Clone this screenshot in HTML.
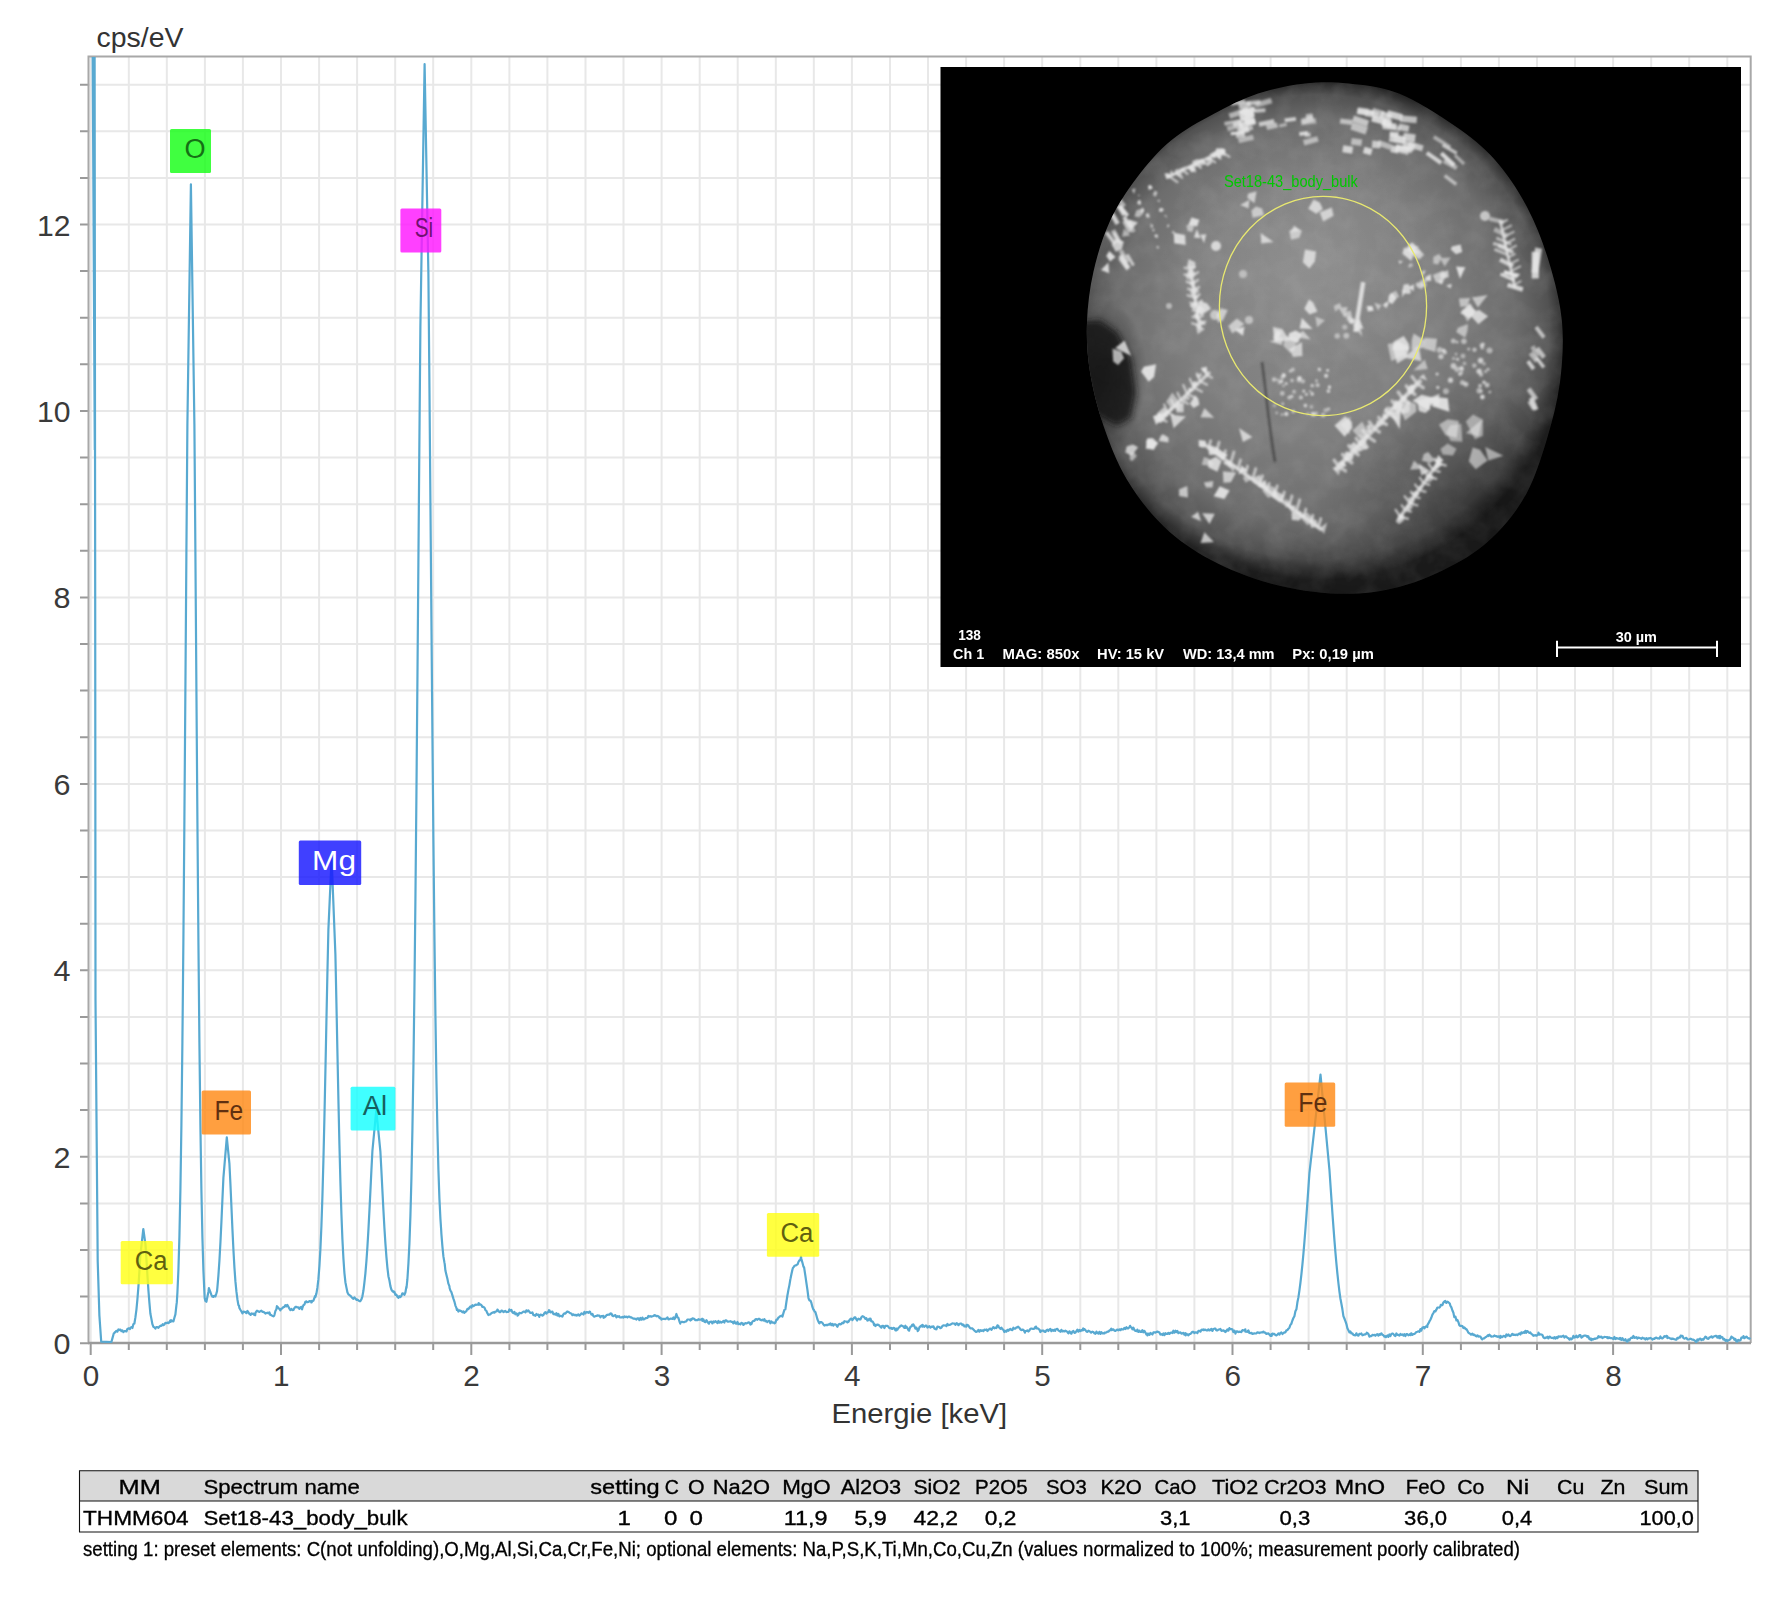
<!DOCTYPE html><html><head><meta charset="utf-8"><style>html,body{margin:0;padding:0;background:#fff;width:1782px;height:1608px;overflow:hidden}svg{display:block}text{font-family:"Liberation Sans", sans-serif}</style></head><body>
<svg width="1782" height="1608" viewBox="0 0 1782 1608">
<rect x="0" y="0" width="1782" height="1608" fill="#fff"/>
<defs><clipPath id="plot"><rect x="89" y="57" width="1662" height="1286"/></clipPath><radialGradient id="sph" cx="0.5" cy="0.47" r="0.5" fx="0.47" fy="0.40"><stop offset="0" stop-color="#8e8e8e"/><stop offset="0.55" stop-color="#858585"/><stop offset="0.82" stop-color="#6c6c6c"/><stop offset="0.95" stop-color="#3e3e3e"/><stop offset="1" stop-color="#1a1a1a"/></radialGradient></defs>
<path d="M90.7 57V1343M128.8 57V1343M166.8 57V1343M204.9 57V1343M242.9 57V1343M281.0 57V1343M319.1 57V1343M357.1 57V1343M395.2 57V1343M433.2 57V1343M471.3 57V1343M509.4 57V1343M547.4 57V1343M585.5 57V1343M623.5 57V1343M661.6 57V1343M699.7 57V1343M737.7 57V1343M775.8 57V1343M813.8 57V1343M851.9 57V1343M890.0 57V1343M928.0 57V1343M966.1 57V1343M1004.1 57V1343M1042.2 57V1343M1080.3 57V1343M1118.3 57V1343M1156.4 57V1343M1194.4 57V1343M1232.5 57V1343M1270.6 57V1343M1308.6 57V1343M1346.7 57V1343M1384.7 57V1343M1422.8 57V1343M1460.9 57V1343M1498.9 57V1343M1537.0 57V1343M1575.0 57V1343M1613.1 57V1343M1651.2 57V1343M1689.2 57V1343M1727.3 57V1343M89 1296.6H1751M89 1250.0H1751M89 1203.4H1751M89 1156.8H1751M89 1110.1H1751M89 1063.5H1751M89 1016.9H1751M89 970.3H1751M89 923.7H1751M89 877.1H1751M89 830.5H1751M89 783.9H1751M89 737.2H1751M89 690.6H1751M89 644.0H1751M89 597.4H1751M89 550.8H1751M89 504.2H1751M89 457.6H1751M89 411.0H1751M89 364.3H1751M89 317.7H1751M89 271.1H1751M89 224.5H1751M89 177.9H1751M89 131.3H1751M89 84.7H1751" stroke="#e8e8e8" stroke-width="2" fill="none"/>
<path d="M80 1343.2H89M80 1296.6H89M80 1250.0H89M80 1203.4H89M80 1156.8H89M80 1110.1H89M80 1063.5H89M80 1016.9H89M80 970.3H89M80 923.7H89M80 877.1H89M80 830.5H89M80 783.9H89M80 737.2H89M80 690.6H89M80 644.0H89M80 597.4H89M80 550.8H89M80 504.2H89M80 457.6H89M80 411.0H89M80 364.3H89M80 317.7H89M80 271.1H89M80 224.5H89M80 177.9H89M80 131.3H89M80 84.7H89M90.7 1343V1355.0M128.8 1343V1350.0M166.8 1343V1350.0M204.9 1343V1350.0M242.9 1343V1350.0M281.0 1343V1355.0M319.1 1343V1350.0M357.1 1343V1350.0M395.2 1343V1350.0M433.2 1343V1350.0M471.3 1343V1355.0M509.4 1343V1350.0M547.4 1343V1350.0M585.5 1343V1350.0M623.5 1343V1350.0M661.6 1343V1355.0M699.7 1343V1350.0M737.7 1343V1350.0M775.8 1343V1350.0M813.8 1343V1350.0M851.9 1343V1355.0M890.0 1343V1350.0M928.0 1343V1350.0M966.1 1343V1350.0M1004.1 1343V1350.0M1042.2 1343V1355.0M1080.3 1343V1350.0M1118.3 1343V1350.0M1156.4 1343V1350.0M1194.4 1343V1350.0M1232.5 1343V1355.0M1270.6 1343V1350.0M1308.6 1343V1350.0M1346.7 1343V1350.0M1384.7 1343V1350.0M1422.8 1343V1355.0M1460.9 1343V1350.0M1498.9 1343V1350.0M1537.0 1343V1350.0M1575.0 1343V1350.0M1613.1 1343V1355.0M1651.2 1343V1350.0M1689.2 1343V1350.0M1727.3 1343V1350.0" stroke="#9a9a9a" stroke-width="2" fill="none"/>
<path d="M88.5 1343V56.5H1750.7V1343" stroke="#a8a8a8" stroke-width="2" fill="none"/>
<path d="M88 1343H1751" stroke="#9a9a9a" stroke-width="2.5" fill="none"/>
<text x="70.5" y="1354.2" font-size="29.5" fill="#3a3a3a" text-anchor="end" textLength="17.0" lengthAdjust="spacingAndGlyphs">0</text>
<text x="70.5" y="1167.8" font-size="29.5" fill="#3a3a3a" text-anchor="end" textLength="17.0" lengthAdjust="spacingAndGlyphs">2</text>
<text x="70.5" y="981.3" font-size="29.5" fill="#3a3a3a" text-anchor="end" textLength="17.0" lengthAdjust="spacingAndGlyphs">4</text>
<text x="70.5" y="794.9" font-size="29.5" fill="#3a3a3a" text-anchor="end" textLength="17.0" lengthAdjust="spacingAndGlyphs">6</text>
<text x="70.5" y="608.4" font-size="29.5" fill="#3a3a3a" text-anchor="end" textLength="17.0" lengthAdjust="spacingAndGlyphs">8</text>
<text x="70.5" y="422.0" font-size="29.5" fill="#3a3a3a" text-anchor="end" textLength="33.5" lengthAdjust="spacingAndGlyphs">10</text>
<text x="70.5" y="235.5" font-size="29.5" fill="#3a3a3a" text-anchor="end" textLength="33.5" lengthAdjust="spacingAndGlyphs">12</text>
<text x="91.0" y="1386.2" font-size="29" fill="#3a3a3a" text-anchor="middle" textLength="16.5" lengthAdjust="spacingAndGlyphs">0</text>
<text x="281.3" y="1386.2" font-size="29" fill="#3a3a3a" text-anchor="middle" textLength="16.5" lengthAdjust="spacingAndGlyphs">1</text>
<text x="471.6" y="1386.2" font-size="29" fill="#3a3a3a" text-anchor="middle" textLength="16.5" lengthAdjust="spacingAndGlyphs">2</text>
<text x="661.9" y="1386.2" font-size="29" fill="#3a3a3a" text-anchor="middle" textLength="16.5" lengthAdjust="spacingAndGlyphs">3</text>
<text x="852.2" y="1386.2" font-size="29" fill="#3a3a3a" text-anchor="middle" textLength="16.5" lengthAdjust="spacingAndGlyphs">4</text>
<text x="1042.5" y="1386.2" font-size="29" fill="#3a3a3a" text-anchor="middle" textLength="16.5" lengthAdjust="spacingAndGlyphs">5</text>
<text x="1232.8" y="1386.2" font-size="29" fill="#3a3a3a" text-anchor="middle" textLength="16.5" lengthAdjust="spacingAndGlyphs">6</text>
<text x="1423.1" y="1386.2" font-size="29" fill="#3a3a3a" text-anchor="middle" textLength="16.5" lengthAdjust="spacingAndGlyphs">7</text>
<text x="1613.4" y="1386.2" font-size="29" fill="#3a3a3a" text-anchor="middle" textLength="16.5" lengthAdjust="spacingAndGlyphs">8</text>
<text x="96.5" y="47.4" font-size="27" fill="#333" textLength="87" lengthAdjust="spacingAndGlyphs">cps/eV</text>
<text x="831.6" y="1423.3" font-size="27" fill="#333" textLength="175.5" lengthAdjust="spacingAndGlyphs">Energie [keV]</text>
<g clip-path="url(#plot)"><path d="M94.8 450.0 L92.6 40.0 L94.6 40.0 L95.2 600.0 L95.5 1000.0 L97.7 1261.0 L99.4 1315.6 L101.2 1341.7 L111.4 1342.0 L112.4 1338.4 L113.4 1334.8 L113.8 1333.3 L114.4 1332.9 L115.4 1331.9 L116.4 1330.8 L117.4 1331.5 L118.4 1329.4 L119.2 1330.1 L119.4 1329.8 L120.4 1329.5 L121.4 1331.2 L122.4 1330.5 L123.4 1332.1 L123.9 1331.4 L124.4 1331.1 L125.4 1331.2 L126.4 1331.5 L127.4 1328.9 L128.4 1328.4 L129.4 1328.6 L130.0 1329.0 L130.4 1327.9 L131.4 1327.2 L132.4 1328.0 L133.4 1324.1 L134.4 1323.5 L135.4 1317.4 L136.4 1309.8 L137.4 1299.3 L138.4 1286.9 L139.4 1271.2 L140.4 1255.2 L143.3 1229.0 L145.4 1243.9 L146.4 1258.6 L147.4 1274.8 L148.4 1290.2 L149.4 1302.6 L150.4 1313.8 L151.4 1318.9 L152.4 1324.2 L153.4 1326.8 L154.4 1327.4 L155.4 1328.6 L155.8 1327.5 L156.4 1327.2 L157.4 1327.1 L158.4 1327.8 L159.4 1326.6 L160.4 1325.7 L161.4 1325.8 L162.4 1324.8 L162.8 1324.2 L163.4 1325.2 L164.4 1324.5 L165.4 1322.8 L166.4 1323.2 L167.4 1322.6 L168.4 1323.1 L169.4 1322.1 L170.4 1320.3 L170.5 1322.0 L171.4 1320.3 L172.4 1321.1 L173.4 1321.4 L174.4 1317.8 L175.4 1314.4 L176.4 1305.4 L176.8 1302.4 L177.4 1292.6 L178.4 1270.3 L179.4 1237.1 L180.4 1189.8 L181.4 1125.4 L182.4 1042.1 L183.4 939.5 L184.4 819.8 L185.4 688.2 L186.4 552.8 L187.4 424.1 L190.9 184.3 L194.4 424.0 L195.4 552.7 L196.4 688.1 L197.4 819.7 L198.4 939.4 L199.4 1042.0 L200.4 1125.3 L201.4 1189.7 L202.4 1237.0 L203.4 1270.2 L204.4 1292.5 L204.7 1298.2 L205.4 1300.9 L206.4 1301.8 L207.4 1296.8 L208.4 1292.0 L208.9 1288.2 L209.4 1289.8 L210.4 1292.0 L211.4 1295.0 L212.4 1296.7 L213.2 1296.2 L213.4 1296.9 L214.4 1295.8 L215.4 1296.4 L216.4 1293.4 L217.0 1291.3 L217.4 1287.4 L218.4 1275.6 L219.4 1261.0 L220.4 1243.0 L221.4 1222.2 L222.4 1199.8 L223.4 1177.9 L226.8 1137.4 L229.4 1163.3 L230.4 1183.5 L231.4 1206.0 L232.4 1228.6 L233.4 1249.3 L234.4 1267.1 L235.4 1281.2 L236.4 1291.4 L237.4 1299.2 L238.4 1305.1 L239.0 1305.6 L239.4 1308.0 L240.4 1309.8 L241.3 1311.3 L241.4 1311.2 L242.4 1313.4 L243.4 1311.7 L244.4 1311.9 L245.4 1312.1 L246.4 1313.2 L247.4 1310.9 L248.0 1311.7 L248.4 1312.3 L249.4 1313.9 L250.4 1314.6 L250.7 1314.9 L251.4 1313.4 L252.4 1313.8 L253.4 1313.6 L254.4 1315.0 L255.2 1315.2 L255.4 1312.8 L256.4 1311.4 L257.0 1310.7 L257.4 1310.8 L258.4 1311.5 L259.4 1311.9 L260.4 1311.2 L261.4 1310.6 L262.4 1311.8 L263.4 1311.8 L264.4 1312.5 L265.4 1313.6 L266.4 1313.0 L267.4 1312.7 L267.9 1313.0 L268.4 1313.4 L269.4 1312.3 L270.4 1315.0 L271.4 1315.2 L272.4 1316.0 L273.4 1316.3 L274.2 1315.6 L274.4 1315.0 L275.4 1311.0 L276.4 1309.2 L276.9 1306.2 L277.4 1306.7 L278.4 1308.0 L279.4 1308.9 L280.4 1310.4 L280.5 1309.7 L281.4 1308.8 L282.4 1308.2 L283.4 1307.1 L284.4 1306.9 L285.4 1305.1 L286.4 1306.3 L286.8 1305.3 L287.4 1305.0 L288.4 1306.8 L289.4 1308.6 L290.4 1310.1 L291.4 1308.9 L292.4 1310.2 L293.4 1310.0 L294.4 1308.0 L294.9 1307.8 L295.4 1306.8 L296.4 1306.8 L297.4 1307.5 L298.4 1307.4 L299.4 1308.9 L300.4 1307.2 L301.4 1306.9 L302.1 1309.4 L302.4 1307.8 L303.4 1305.2 L304.4 1304.6 L305.4 1301.7 L306.4 1301.4 L306.6 1302.2 L307.4 1302.2 L308.4 1302.0 L309.4 1301.1 L310.4 1301.5 L311.2 1301.0 L311.4 1302.5 L312.4 1301.1 L313.4 1300.7 L314.4 1298.0 L315.2 1295.8 L315.4 1296.8 L316.4 1293.6 L317.4 1287.7 L318.4 1279.2 L319.4 1266.1 L320.4 1249.1 L321.4 1226.2 L322.4 1196.9 L323.4 1160.8 L324.4 1118.6 L325.4 1071.6 L326.4 1022.2 L327.4 973.6 L328.4 929.4 L331.6 858.0 L335.4 954.5 L336.4 1001.7 L337.4 1051.1 L338.4 1099.2 L339.4 1143.4 L340.4 1181.8 L341.4 1213.7 L342.4 1239.0 L343.4 1258.1 L344.4 1272.8 L345.4 1282.2 L346.4 1287.4 L347.4 1292.3 L348.4 1294.4 L349.4 1295.0 L350.4 1295.8 L351.2 1296.8 L351.4 1296.8 L352.4 1298.1 L353.4 1298.9 L354.4 1297.5 L355.4 1298.6 L355.6 1298.7 L356.4 1299.8 L357.4 1299.6 L358.4 1300.4 L359.4 1301.1 L360.3 1301.2 L360.4 1301.0 L361.4 1299.4 L362.4 1296.3 L363.4 1290.8 L364.4 1282.7 L365.4 1273.3 L366.4 1261.4 L367.4 1247.0 L368.4 1230.1 L369.4 1211.1 L370.4 1190.9 L371.4 1170.4 L372.4 1151.0 L376.3 1110.0 L380.4 1151.7 L381.4 1170.7 L382.4 1190.5 L383.4 1209.8 L384.4 1227.7 L385.4 1243.4 L386.4 1256.6 L387.4 1267.6 L388.4 1276.2 L389.4 1280.3 L390.4 1286.1 L391.4 1289.6 L392.4 1291.1 L393.4 1292.0 L393.6 1291.4 L394.4 1291.9 L395.4 1294.8 L396.4 1294.6 L397.4 1296.7 L398.4 1297.9 L398.6 1296.5 L399.4 1296.2 L400.4 1297.1 L401.4 1295.8 L402.3 1293.4 L402.4 1293.4 L403.4 1293.6 L404.4 1294.9 L405.4 1292.5 L406.4 1286.6 L406.5 1287.8 L407.4 1279.2 L408.4 1263.8 L409.4 1243.9 L410.4 1216.2 L411.4 1179.0 L412.4 1130.2 L413.4 1068.2 L414.4 991.9 L415.4 901.3 L416.4 797.4 L417.4 682.9 L418.4 562.2 L419.4 440.9 L420.4 325.9 L424.6 64.2 L428.4 274.1 L429.4 382.1 L430.4 499.4 L431.4 618.7 L432.4 733.8 L433.4 839.9 L434.4 933.7 L435.4 1013.4 L436.4 1078.6 L437.4 1130.1 L438.4 1169.3 L439.4 1198.1 L440.4 1218.5 L441.1 1228.8 L441.4 1234.0 L442.4 1246.3 L443.4 1256.4 L444.4 1262.4 L444.7 1263.9 L445.4 1270.5 L446.4 1274.7 L447.4 1278.7 L448.4 1283.7 L449.4 1286.1 L449.6 1288.0 L450.4 1290.5 L451.4 1292.1 L452.4 1295.3 L453.4 1298.6 L454.4 1301.6 L455.4 1305.6 L456.4 1307.9 L456.9 1309.9 L457.4 1309.2 L458.4 1311.5 L459.4 1310.3 L460.4 1310.7 L461.4 1311.3 L462.4 1312.3 L463.4 1311.3 L464.4 1312.8 L465.3 1311.9 L465.4 1311.9 L466.4 1311.1 L467.4 1308.9 L468.4 1309.2 L469.4 1307.7 L470.4 1306.4 L471.4 1307.7 L472.4 1305.2 L472.6 1305.8 L473.4 1306.2 L474.4 1305.5 L475.4 1304.6 L476.4 1304.8 L477.4 1304.5 L478.4 1304.8 L478.7 1303.0 L479.4 1304.6 L480.4 1304.4 L481.4 1305.1 L482.4 1307.0 L483.4 1306.9 L484.4 1307.6 L484.8 1308.4 L485.4 1310.0 L486.4 1310.8 L487.4 1313.3 L488.4 1315.0 L489.4 1314.5 L490.4 1314.3 L491.4 1313.1 L492.4 1312.8 L493.4 1312.1 L494.4 1312.7 L495.4 1311.5 L496.4 1311.4 L496.9 1311.2 L497.4 1309.6 L498.4 1310.7 L499.4 1312.1 L500.4 1312.1 L501.4 1310.6 L502.4 1310.9 L503.4 1312.1 L504.2 1311.4 L504.4 1311.7 L505.4 1310.9 L506.4 1312.1 L507.4 1312.0 L508.4 1311.9 L509.4 1309.5 L510.2 1310.7 L510.4 1310.6 L511.4 1309.9 L512.4 1312.4 L513.4 1313.2 L514.4 1311.8 L515.4 1314.3 L516.4 1313.4 L517.4 1314.2 L517.5 1315.6 L518.4 1314.9 L519.4 1312.8 L520.4 1313.2 L521.4 1313.1 L522.4 1312.4 L523.4 1311.7 L524.4 1311.7 L525.4 1312.4 L526.4 1310.3 L527.2 1311.4 L527.4 1311.2 L528.4 1310.5 L529.4 1311.8 L530.4 1312.9 L531.4 1313.0 L532.4 1312.3 L533.4 1315.1 L534.4 1315.0 L535.4 1315.8 L536.4 1314.0 L537.4 1314.8 L538.4 1314.6 L539.3 1316.9 L539.4 1315.6 L540.4 1314.7 L541.4 1314.9 L542.4 1315.7 L543.4 1315.0 L544.4 1313.0 L545.4 1312.2 L546.4 1313.7 L547.4 1312.3 L548.4 1312.1 L549.0 1310.2 L549.4 1310.3 L550.4 1312.4 L551.4 1312.1 L552.4 1311.6 L553.4 1314.2 L554.4 1313.8 L555.4 1314.7 L556.4 1313.2 L557.4 1315.6 L558.4 1313.9 L559.4 1316.4 L560.4 1315.8 L561.2 1315.8 L561.4 1316.2 L562.4 1316.6 L563.4 1314.2 L564.4 1313.3 L565.4 1313.7 L566.4 1312.3 L567.2 1311.5 L567.4 1311.7 L568.4 1311.8 L569.4 1312.6 L570.4 1313.2 L571.4 1313.6 L572.4 1315.2 L573.4 1314.3 L574.4 1315.2 L575.4 1314.8 L576.4 1315.6 L576.9 1314.9 L577.4 1315.3 L578.4 1314.3 L579.4 1315.7 L580.4 1314.8 L581.4 1313.4 L582.4 1313.7 L583.4 1314.5 L584.4 1311.9 L585.4 1313.3 L586.4 1312.2 L587.4 1312.2 L588.4 1312.9 L589.4 1311.6 L590.0 1311.8 L590.4 1312.7 L591.4 1314.5 L592.4 1313.8 L593.4 1316.1 L594.4 1316.7 L594.5 1316.7 L595.4 1316.1 L596.4 1316.0 L597.4 1315.3 L598.4 1315.6 L599.4 1315.5 L600.4 1317.3 L601.4 1316.1 L602.4 1316.0 L603.4 1315.8 L603.5 1317.8 L604.4 1317.5 L605.4 1316.7 L606.4 1315.3 L607.4 1314.8 L608.4 1314.6 L609.4 1314.7 L610.4 1313.5 L611.3 1314.0 L611.4 1313.5 L612.4 1315.8 L613.4 1316.2 L614.4 1315.5 L615.4 1315.1 L616.4 1317.4 L617.4 1316.2 L618.4 1316.7 L619.2 1316.1 L619.4 1317.1 L620.4 1317.4 L621.4 1317.5 L622.4 1316.8 L623.4 1317.6 L624.4 1316.3 L625.4 1317.1 L626.4 1316.7 L627.4 1317.5 L628.4 1316.6 L629.4 1316.6 L630.4 1317.4 L631.4 1317.3 L632.4 1318.2 L632.6 1318.1 L633.4 1318.7 L634.4 1318.6 L635.4 1318.9 L636.4 1319.5 L637.4 1318.3 L638.4 1318.3 L639.4 1320.1 L640.4 1318.0 L641.4 1319.7 L641.6 1319.5 L642.4 1317.6 L643.4 1319.4 L644.4 1319.2 L645.4 1318.2 L646.4 1318.1 L647.4 1318.0 L648.4 1315.9 L649.4 1316.6 L650.4 1316.2 L651.4 1316.7 L652.4 1316.3 L653.4 1316.0 L654.4 1315.1 L655.1 1315.6 L655.4 1315.3 L656.4 1316.3 L657.4 1315.9 L658.4 1316.3 L659.4 1317.5 L659.6 1318.2 L660.4 1317.6 L661.4 1319.5 L662.4 1318.8 L663.4 1318.9 L664.4 1318.9 L665.4 1319.1 L666.4 1318.6 L667.4 1317.3 L668.4 1319.4 L669.4 1319.2 L670.4 1318.6 L671.4 1318.7 L672.4 1319.0 L673.4 1317.5 L674.4 1319.2 L675.3 1318.0 L675.4 1317.1 L676.4 1314.0 L677.4 1317.2 L678.4 1317.9 L679.4 1321.3 L680.3 1323.7 L680.4 1322.5 L681.4 1321.9 L682.4 1321.9 L683.4 1322.2 L684.4 1322.1 L685.4 1321.5 L686.4 1321.3 L687.4 1319.5 L688.4 1319.5 L689.4 1319.5 L690.4 1320.5 L691.0 1319.2 L691.4 1319.9 L692.4 1318.4 L693.4 1318.6 L694.4 1319.1 L695.4 1320.1 L696.4 1320.2 L697.4 1320.2 L698.4 1319.2 L699.4 1319.7 L700.4 1319.6 L701.4 1319.6 L702.2 1318.7 L702.4 1320.8 L703.4 1319.4 L704.4 1321.8 L705.4 1322.2 L706.4 1320.2 L707.4 1321.7 L708.4 1323.1 L709.0 1323.7 L709.4 1322.3 L710.4 1321.8 L711.4 1321.6 L712.4 1323.4 L713.4 1321.4 L714.4 1322.3 L715.4 1321.1 L716.4 1322.0 L717.4 1323.1 L718.4 1320.9 L719.4 1322.6 L720.4 1321.7 L721.4 1322.6 L722.4 1322.1 L723.4 1320.8 L724.4 1322.5 L724.7 1321.4 L725.4 1320.3 L726.4 1320.3 L727.4 1321.7 L728.4 1321.7 L729.4 1321.5 L730.4 1321.2 L731.4 1321.8 L732.4 1321.9 L733.4 1323.4 L734.4 1321.3 L735.4 1323.4 L736.4 1323.7 L737.4 1322.0 L738.4 1324.2 L739.4 1323.8 L740.4 1324.4 L741.4 1322.9 L742.4 1323.2 L742.6 1323.3 L743.4 1324.9 L744.4 1323.8 L745.4 1323.2 L746.4 1323.4 L747.4 1323.0 L748.4 1322.4 L749.4 1322.6 L750.4 1324.5 L750.5 1323.0 L751.4 1324.1 L752.4 1321.6 L753.4 1320.9 L754.4 1320.8 L755.4 1319.3 L756.4 1319.0 L757.4 1319.8 L758.3 1319.0 L758.4 1318.8 L759.4 1318.8 L760.4 1319.9 L761.4 1320.3 L762.4 1319.7 L763.4 1320.5 L764.4 1319.1 L765.4 1321.3 L766.4 1320.9 L767.3 1322.1 L767.4 1321.8 L768.4 1321.1 L769.4 1320.8 L770.4 1323.3 L771.4 1321.5 L772.4 1322.6 L773.4 1322.5 L774.0 1322.6 L774.4 1323.3 L775.4 1322.7 L776.4 1319.7 L777.4 1319.6 L778.4 1317.5 L779.0 1317.4 L779.4 1316.9 L780.4 1316.0 L781.4 1315.7 L782.1 1315.6 L782.4 1316.7 L783.4 1313.1 L784.4 1309.9 L785.3 1309.4 L785.4 1309.0 L786.4 1302.0 L787.4 1295.5 L788.0 1292.3 L788.4 1289.9 L789.4 1285.1 L790.4 1279.0 L790.6 1278.3 L791.4 1274.2 L792.4 1269.8 L792.9 1268.0 L793.4 1267.4 L794.4 1266.0 L795.4 1265.4 L796.4 1265.2 L797.4 1264.3 L797.8 1264.0 L798.4 1262.0 L799.4 1260.4 L800.4 1260.1 L801.0 1256.6 L801.4 1259.0 L802.4 1262.6 L803.4 1266.6 L804.1 1267.3 L804.4 1269.4 L805.4 1275.9 L806.4 1282.9 L807.4 1289.6 L808.4 1297.5 L808.6 1298.5 L809.4 1300.4 L810.4 1300.5 L811.4 1302.9 L812.4 1306.9 L813.4 1309.7 L814.0 1310.0 L814.4 1311.3 L815.4 1312.1 L816.4 1315.5 L817.4 1319.3 L818.4 1321.5 L818.9 1322.7 L819.4 1323.3 L820.4 1322.0 L821.4 1322.1 L822.4 1322.8 L823.4 1324.3 L823.9 1325.0 L824.4 1325.6 L825.4 1325.1 L826.4 1324.9 L827.4 1325.2 L828.4 1324.4 L829.4 1324.6 L830.4 1323.3 L831.4 1325.2 L832.4 1323.8 L833.4 1325.6 L833.7 1324.9 L834.4 1324.3 L835.4 1324.4 L836.4 1325.2 L837.3 1326.7 L837.4 1326.8 L838.4 1324.6 L839.4 1323.9 L840.4 1324.5 L841.4 1324.1 L841.8 1323.3 L842.4 1322.6 L843.4 1323.2 L844.4 1321.2 L845.4 1321.5 L846.4 1321.5 L847.4 1322.4 L848.1 1321.3 L848.4 1321.8 L849.4 1320.2 L850.4 1319.1 L851.4 1318.6 L852.4 1320.0 L853.4 1318.8 L854.4 1317.3 L855.4 1317.4 L856.4 1319.4 L857.1 1320.5 L857.4 1319.6 L858.4 1318.7 L859.4 1319.3 L860.4 1319.5 L861.4 1317.2 L862.4 1316.2 L863.4 1316.5 L864.4 1317.4 L865.4 1318.8 L866.4 1318.2 L867.4 1320.5 L867.8 1320.6 L868.4 1319.8 L869.4 1318.7 L870.4 1320.4 L870.5 1318.6 L871.4 1321.3 L872.4 1321.3 L873.4 1322.7 L874.1 1325.2 L874.4 1324.0 L875.4 1326.0 L876.4 1325.1 L877.4 1324.6 L878.4 1324.9 L879.4 1325.7 L880.4 1326.6 L881.4 1327.6 L882.2 1325.8 L882.4 1326.4 L883.4 1326.0 L884.4 1328.1 L885.4 1325.9 L886.4 1325.8 L887.4 1325.8 L888.4 1326.8 L889.4 1328.1 L890.4 1328.2 L891.2 1327.8 L891.4 1328.6 L892.4 1328.9 L893.4 1327.9 L894.4 1328.0 L895.4 1330.4 L896.4 1330.4 L896.6 1328.7 L897.4 1329.6 L898.4 1328.0 L899.4 1327.1 L900.2 1326.3 L900.4 1325.8 L901.4 1325.4 L902.4 1326.1 L903.4 1326.3 L904.4 1327.9 L905.4 1325.7 L905.5 1327.9 L906.4 1326.7 L907.4 1328.0 L908.4 1330.1 L909.1 1330.7 L909.4 1329.3 L910.4 1326.8 L911.4 1326.4 L912.4 1324.6 L912.7 1325.6 L913.4 1324.5 L914.4 1326.1 L915.4 1328.7 L916.4 1327.6 L917.4 1329.7 L917.7 1331.1 L918.4 1330.3 L919.4 1327.4 L920.4 1326.4 L921.4 1325.5 L922.4 1326.7 L922.6 1324.8 L923.4 1326.2 L924.4 1326.8 L925.4 1325.6 L926.4 1325.6 L927.4 1327.6 L928.4 1326.9 L929.4 1326.2 L930.4 1327.6 L931.4 1326.7 L932.4 1326.8 L933.4 1326.3 L934.4 1328.5 L935.4 1329.1 L936.2 1328.5 L936.4 1329.3 L937.4 1326.6 L938.4 1326.8 L939.4 1327.1 L940.4 1328.1 L941.4 1327.8 L942.4 1326.0 L943.4 1325.3 L944.4 1325.5 L945.4 1325.3 L946.4 1326.2 L947.4 1323.9 L948.4 1325.2 L949.4 1324.8 L950.4 1324.7 L950.8 1324.4 L951.4 1324.0 L952.4 1323.4 L953.4 1323.5 L954.4 1323.7 L955.4 1324.9 L956.4 1323.2 L957.4 1323.6 L958.4 1325.2 L959.4 1324.0 L960.4 1323.6 L961.4 1323.6 L962.4 1325.1 L963.4 1324.6 L964.4 1326.4 L965.4 1326.3 L966.4 1326.7 L966.5 1324.8 L967.4 1324.9 L968.4 1325.5 L969.4 1327.2 L970.4 1328.4 L971.4 1328.3 L972.4 1328.4 L973.4 1329.5 L974.4 1330.6 L975.4 1331.4 L975.5 1331.6 L976.4 1331.9 L977.4 1331.3 L978.4 1329.9 L979.4 1331.7 L980.4 1330.2 L981.4 1330.9 L982.4 1330.3 L983.4 1331.2 L984.4 1329.7 L985.4 1329.8 L986.4 1329.8 L986.7 1329.5 L987.4 1331.1 L988.4 1330.0 L989.4 1328.9 L990.4 1328.7 L991.4 1329.9 L992.4 1328.2 L993.4 1327.1 L994.4 1328.3 L995.4 1327.5 L996.4 1328.0 L997.4 1325.3 L998.4 1325.9 L998.5 1326.7 L999.4 1327.7 L1000.4 1328.9 L1001.4 1327.6 L1002.4 1329.3 L1003.4 1329.8 L1003.6 1330.2 L1004.4 1332.0 L1005.4 1330.8 L1006.4 1331.5 L1007.4 1329.8 L1008.4 1330.8 L1009.4 1329.5 L1010.4 1328.8 L1011.4 1329.9 L1012.4 1330.1 L1013.4 1327.7 L1014.4 1328.7 L1015.4 1328.6 L1016.4 1327.3 L1017.4 1327.4 L1018.2 1326.7 L1018.4 1327.0 L1019.4 1327.8 L1020.4 1329.3 L1021.4 1330.1 L1022.4 1329.6 L1023.4 1329.8 L1024.4 1331.3 L1024.9 1332.6 L1025.4 1331.1 L1026.4 1331.0 L1027.4 1330.3 L1028.4 1331.5 L1029.4 1330.4 L1030.4 1328.8 L1031.4 1328.5 L1032.4 1328.8 L1033.4 1328.8 L1034.4 1328.6 L1035.4 1326.8 L1036.1 1326.7 L1036.4 1328.3 L1037.4 1328.3 L1038.4 1328.8 L1039.4 1329.6 L1040.4 1332.0 L1040.6 1330.5 L1041.4 1331.1 L1042.4 1330.5 L1043.4 1330.6 L1044.4 1331.6 L1045.4 1331.9 L1046.4 1330.2 L1047.4 1329.7 L1048.4 1331.0 L1049.4 1329.5 L1050.4 1328.9 L1051.4 1331.2 L1052.4 1329.8 L1053.4 1330.8 L1054.4 1329.6 L1055.2 1330.8 L1055.4 1329.7 L1056.4 1329.1 L1057.4 1328.9 L1058.4 1330.5 L1059.4 1330.9 L1060.4 1331.8 L1061.4 1329.8 L1062.4 1331.4 L1063.4 1330.9 L1064.4 1331.5 L1065.4 1330.7 L1066.4 1331.2 L1067.4 1332.0 L1068.4 1333.3 L1069.4 1331.3 L1070.4 1332.5 L1070.9 1333.4 L1071.4 1333.7 L1072.4 1331.4 L1073.4 1331.0 L1074.4 1332.8 L1075.4 1332.6 L1076.4 1331.1 L1077.4 1329.7 L1078.4 1331.7 L1079.4 1330.0 L1080.4 1331.1 L1081.4 1330.1 L1082.4 1330.4 L1083.2 1328.4 L1083.4 1330.1 L1084.4 1329.1 L1085.4 1330.0 L1086.4 1331.5 L1087.4 1331.9 L1088.4 1330.6 L1089.4 1331.2 L1090.4 1332.0 L1091.1 1332.6 L1091.4 1332.3 L1092.4 1331.7 L1093.4 1332.0 L1094.4 1333.3 L1095.4 1333.8 L1096.4 1331.6 L1097.4 1333.0 L1098.4 1333.6 L1099.4 1331.8 L1100.4 1333.9 L1101.4 1332.1 L1102.4 1333.4 L1103.4 1333.3 L1104.4 1333.5 L1104.6 1332.7 L1105.4 1332.6 L1106.4 1332.5 L1107.4 1331.6 L1108.4 1331.7 L1109.4 1330.6 L1110.4 1330.1 L1111.3 1328.6 L1111.4 1330.1 L1112.4 1329.9 L1113.4 1329.3 L1114.4 1330.7 L1115.4 1330.9 L1116.4 1330.1 L1117.4 1329.5 L1118.4 1330.3 L1119.4 1329.4 L1120.0 1329.5 L1120.4 1330.2 L1121.4 1329.0 L1122.4 1329.5 L1123.4 1329.3 L1124.4 1327.8 L1125.4 1329.0 L1126.4 1327.2 L1127.4 1328.5 L1128.4 1328.3 L1129.4 1327.3 L1130.1 1325.8 L1130.4 1327.2 L1131.4 1327.3 L1132.4 1329.3 L1133.4 1327.7 L1134.4 1330.0 L1135.4 1330.9 L1136.4 1330.7 L1137.2 1331.3 L1137.4 1329.7 L1138.4 1331.9 L1139.4 1330.7 L1140.4 1332.0 L1141.4 1331.9 L1142.4 1330.1 L1143.2 1331.7 L1143.4 1332.3 L1144.4 1330.9 L1145.4 1332.5 L1146.4 1334.4 L1147.3 1333.6 L1147.4 1335.5 L1148.4 1333.7 L1149.4 1334.9 L1150.4 1332.9 L1151.4 1333.6 L1152.4 1334.5 L1153.4 1332.4 L1154.4 1332.3 L1155.4 1332.7 L1156.4 1332.0 L1157.4 1331.5 L1158.4 1332.2 L1159.4 1332.4 L1160.4 1334.6 L1161.4 1334.2 L1162.4 1335.0 L1163.4 1333.4 L1164.4 1335.2 L1165.4 1333.2 L1166.4 1334.0 L1167.4 1333.9 L1168.4 1332.9 L1169.4 1333.9 L1170.4 1332.8 L1171.4 1332.5 L1172.4 1333.0 L1173.4 1330.7 L1174.4 1332.7 L1175.4 1331.4 L1175.6 1330.7 L1176.4 1332.1 L1177.4 1331.0 L1178.4 1333.2 L1179.4 1332.5 L1180.4 1332.3 L1181.4 1333.7 L1182.4 1333.2 L1183.4 1332.9 L1184.4 1334.7 L1185.4 1333.2 L1185.7 1335.3 L1186.4 1333.7 L1187.4 1334.5 L1188.4 1335.3 L1189.4 1334.0 L1190.4 1334.0 L1191.4 1332.9 L1192.4 1331.9 L1193.4 1331.8 L1193.7 1332.1 L1194.4 1333.1 L1195.4 1332.4 L1196.4 1332.4 L1197.4 1333.1 L1198.4 1330.9 L1199.4 1330.9 L1200.4 1331.7 L1201.4 1329.9 L1202.4 1329.6 L1203.4 1330.2 L1203.8 1329.5 L1204.4 1330.1 L1205.4 1329.7 L1206.4 1330.5 L1207.4 1330.4 L1208.4 1329.4 L1209.4 1330.4 L1210.4 1329.9 L1211.4 1328.9 L1212.4 1330.9 L1213.4 1329.0 L1214.4 1328.7 L1215.4 1328.5 L1216.0 1329.9 L1216.4 1330.5 L1217.4 1330.5 L1218.4 1329.6 L1219.4 1329.5 L1220.4 1329.0 L1221.4 1330.8 L1222.4 1330.7 L1223.4 1330.3 L1224.4 1331.3 L1225.0 1330.9 L1225.4 1332.0 L1226.4 1331.1 L1227.4 1329.4 L1228.4 1330.7 L1229.4 1328.1 L1230.1 1329.1 L1230.4 1329.0 L1231.4 1329.2 L1232.4 1329.4 L1233.4 1332.0 L1234.4 1330.7 L1235.2 1332.6 L1235.4 1333.6 L1236.4 1331.3 L1237.4 1331.3 L1238.4 1332.1 L1239.4 1331.7 L1240.4 1331.8 L1241.4 1332.1 L1242.4 1330.2 L1243.4 1330.4 L1244.4 1330.2 L1245.3 1329.3 L1245.4 1331.6 L1246.4 1331.7 L1247.4 1331.9 L1248.4 1330.4 L1249.4 1333.0 L1250.4 1333.2 L1251.4 1332.8 L1252.4 1333.9 L1253.4 1333.6 L1254.4 1333.4 L1255.4 1333.5 L1256.4 1333.3 L1257.4 1332.3 L1258.4 1332.6 L1259.4 1333.1 L1260.4 1332.5 L1261.4 1332.4 L1262.4 1332.4 L1263.4 1331.6 L1264.4 1332.7 L1265.4 1332.7 L1266.4 1334.0 L1267.4 1333.6 L1268.4 1333.3 L1269.4 1334.6 L1270.4 1335.8 L1271.4 1334.2 L1271.5 1336.0 L1272.4 1333.6 L1273.4 1334.1 L1274.4 1333.9 L1275.4 1335.0 L1276.4 1335.4 L1277.4 1334.7 L1278.4 1333.4 L1279.4 1334.7 L1280.4 1333.0 L1281.4 1332.5 L1282.4 1334.0 L1283.4 1332.9 L1283.6 1333.0 L1284.4 1332.4 L1285.4 1332.4 L1286.4 1330.3 L1287.4 1330.2 L1288.4 1328.7 L1289.4 1327.7 L1290.4 1324.9 L1291.4 1323.7 L1291.7 1322.6 L1292.4 1320.5 L1293.4 1318.0 L1294.4 1316.2 L1295.4 1311.3 L1296.4 1309.3 L1297.4 1302.3 L1298.4 1297.4 L1299.4 1290.7 L1300.4 1283.0 L1301.4 1274.3 L1302.4 1264.6 L1303.4 1253.8 L1304.4 1242.1 L1305.4 1229.5 L1306.4 1216.2 L1307.4 1202.2 L1308.4 1187.9 L1309.4 1173.4 L1320.5 1074.5 L1329.4 1169.3 L1330.4 1184.0 L1331.4 1198.6 L1332.4 1213.0 L1333.4 1226.7 L1334.4 1239.8 L1335.4 1252.1 L1336.4 1263.4 L1337.4 1273.7 L1338.4 1283.0 L1339.4 1291.3 L1340.4 1298.5 L1341.4 1303.7 L1342.4 1309.3 L1343.4 1316.1 L1344.4 1318.5 L1345.1 1320.4 L1345.4 1321.1 L1346.4 1324.1 L1347.4 1328.3 L1348.4 1330.2 L1349.4 1332.2 L1349.5 1332.4 L1350.4 1331.5 L1351.4 1333.5 L1352.4 1333.4 L1353.4 1334.9 L1354.4 1335.1 L1355.4 1335.4 L1356.4 1333.3 L1357.4 1335.4 L1358.2 1335.5 L1358.4 1335.6 L1359.4 1333.8 L1360.0 1334.2 L1360.4 1333.9 L1361.4 1333.5 L1362.4 1335.3 L1363.4 1335.0 L1364.4 1334.3 L1365.4 1334.5 L1366.4 1333.7 L1366.7 1332.7 L1367.4 1333.0 L1368.4 1334.0 L1369.4 1336.7 L1370.1 1335.9 L1370.4 1336.1 L1371.4 1336.1 L1372.4 1334.8 L1373.4 1335.2 L1374.4 1334.9 L1375.4 1335.8 L1376.4 1334.6 L1377.4 1334.2 L1378.4 1335.6 L1379.4 1334.1 L1380.2 1334.8 L1380.4 1334.3 L1381.4 1333.3 L1382.4 1334.8 L1383.4 1335.3 L1384.4 1336.7 L1385.4 1336.1 L1385.8 1337.2 L1386.4 1336.6 L1387.4 1335.4 L1388.4 1336.8 L1389.4 1334.4 L1390.4 1336.0 L1391.4 1333.9 L1392.4 1333.5 L1393.4 1334.0 L1394.4 1335.5 L1395.4 1336.0 L1396.4 1333.5 L1397.4 1334.8 L1398.4 1334.8 L1399.4 1335.6 L1400.4 1334.0 L1401.4 1334.8 L1402.4 1334.4 L1403.4 1335.7 L1404.4 1334.2 L1405.4 1336.0 L1406.4 1334.2 L1407.4 1334.1 L1408.4 1335.3 L1409.4 1334.8 L1410.4 1333.8 L1410.5 1335.2 L1411.4 1333.3 L1412.4 1334.8 L1413.4 1334.1 L1414.4 1334.0 L1415.4 1333.1 L1416.4 1332.0 L1417.4 1331.7 L1418.4 1331.3 L1419.4 1331.9 L1420.4 1329.1 L1421.4 1330.5 L1422.4 1327.6 L1423.4 1327.4 L1424.0 1327.1 L1424.4 1328.5 L1425.4 1327.0 L1426.4 1326.1 L1427.3 1327.0 L1427.4 1325.1 L1428.4 1323.4 L1429.4 1321.4 L1430.4 1319.7 L1431.4 1317.5 L1431.8 1316.3 L1432.4 1314.6 L1433.4 1313.1 L1434.4 1311.1 L1435.4 1311.4 L1436.3 1309.6 L1436.4 1309.8 L1437.4 1307.5 L1438.4 1307.5 L1439.4 1307.6 L1440.4 1306.3 L1440.8 1304.8 L1441.4 1305.1 L1442.4 1305.2 L1443.4 1302.5 L1444.4 1301.4 L1445.3 1300.8 L1445.4 1301.9 L1446.4 1302.9 L1447.4 1301.7 L1448.4 1302.3 L1449.4 1303.2 L1449.8 1303.6 L1450.4 1305.7 L1451.4 1307.4 L1452.4 1310.5 L1453.4 1312.7 L1454.3 1317.1 L1454.4 1316.7 L1455.4 1316.6 L1456.4 1320.5 L1457.4 1319.8 L1458.4 1322.2 L1459.4 1325.4 L1459.9 1325.7 L1460.4 1325.9 L1461.4 1325.9 L1462.4 1326.1 L1463.4 1328.1 L1464.4 1327.5 L1465.4 1328.6 L1465.5 1329.1 L1466.4 1329.0 L1467.4 1330.8 L1468.4 1332.7 L1469.4 1333.4 L1470.4 1333.8 L1471.1 1334.7 L1471.4 1334.4 L1472.4 1333.7 L1473.4 1335.1 L1474.4 1334.7 L1475.4 1335.8 L1476.4 1336.4 L1477.4 1335.3 L1477.8 1335.8 L1478.4 1336.6 L1479.4 1336.4 L1480.4 1336.5 L1481.4 1338.4 L1482.3 1339.4 L1482.4 1339.1 L1483.4 1338.4 L1484.4 1338.3 L1485.4 1337.3 L1486.4 1336.8 L1487.4 1335.8 L1488.0 1335.1 L1488.4 1336.0 L1489.4 1334.7 L1490.4 1335.6 L1491.4 1336.6 L1492.4 1336.5 L1493.4 1336.4 L1494.4 1335.5 L1495.4 1336.1 L1496.4 1336.2 L1497.4 1336.8 L1498.4 1336.3 L1499.4 1337.1 L1500.3 1337.8 L1500.4 1335.9 L1501.4 1336.9 L1502.4 1337.1 L1503.4 1335.9 L1504.4 1336.0 L1505.4 1337.1 L1506.4 1334.5 L1507.4 1335.6 L1508.4 1334.5 L1509.4 1335.9 L1510.4 1336.1 L1511.4 1335.0 L1512.4 1333.8 L1513.4 1334.9 L1514.4 1334.7 L1515.4 1335.1 L1516.4 1334.5 L1517.1 1334.8 L1517.4 1335.2 L1518.4 1334.1 L1519.4 1333.5 L1520.4 1334.5 L1521.4 1332.3 L1522.4 1333.2 L1523.4 1332.2 L1524.4 1332.8 L1525.4 1330.8 L1526.1 1332.9 L1526.4 1331.4 L1527.4 1331.1 L1528.4 1332.2 L1529.4 1333.0 L1530.4 1332.5 L1531.4 1334.0 L1532.4 1334.5 L1533.4 1335.8 L1534.4 1335.4 L1535.1 1335.5 L1535.4 1335.1 L1536.4 1335.7 L1537.4 1335.3 L1538.4 1333.5 L1538.5 1332.6 L1539.4 1334.7 L1540.4 1334.3 L1541.4 1334.5 L1542.4 1335.0 L1543.4 1337.3 L1544.4 1338.1 L1545.2 1338.1 L1545.4 1337.7 L1546.4 1337.7 L1547.4 1336.7 L1548.4 1338.4 L1549.4 1336.6 L1550.4 1337.1 L1550.8 1337.5 L1551.4 1338.0 L1552.4 1337.9 L1553.0 1337.9 L1553.4 1338.4 L1554.4 1337.1 L1555.4 1338.6 L1556.4 1337.1 L1557.4 1338.2 L1558.4 1336.4 L1559.4 1336.7 L1560.4 1336.4 L1561.4 1336.8 L1562.4 1336.2 L1563.4 1335.7 L1564.4 1337.6 L1565.4 1336.4 L1566.2 1336.3 L1566.4 1336.6 L1567.4 1337.8 L1568.4 1338.3 L1569.4 1339.5 L1569.6 1339.7 L1570.4 1338.4 L1571.4 1339.3 L1572.4 1338.5 L1573.4 1335.8 L1574.1 1337.4 L1574.4 1337.6 L1575.4 1337.2 L1576.4 1335.6 L1577.4 1337.4 L1578.4 1336.8 L1579.4 1335.2 L1580.4 1335.2 L1581.4 1337.7 L1582.4 1336.9 L1583.4 1335.9 L1584.4 1335.5 L1585.4 1335.6 L1586.4 1335.8 L1587.4 1337.2 L1587.5 1336.1 L1588.4 1336.3 L1589.4 1339.1 L1590.4 1339.6 L1590.9 1338.4 L1591.4 1340.2 L1592.4 1339.1 L1593.4 1339.3 L1594.4 1338.6 L1595.4 1338.9 L1596.4 1338.3 L1597.4 1338.2 L1598.4 1336.2 L1599.4 1337.2 L1599.9 1336.6 L1600.4 1337.2 L1601.4 1336.7 L1602.4 1338.0 L1603.4 1337.4 L1604.4 1336.9 L1605.4 1337.0 L1606.4 1337.0 L1607.4 1338.1 L1607.7 1337.1 L1608.4 1338.1 L1609.4 1337.3 L1610.4 1338.2 L1611.4 1338.2 L1612.4 1338.3 L1613.4 1339.1 L1614.4 1336.9 L1615.4 1339.1 L1616.4 1338.1 L1617.4 1338.4 L1618.4 1338.6 L1619.4 1339.1 L1620.1 1337.9 L1620.4 1338.1 L1621.4 1339.9 L1622.4 1338.1 L1623.4 1339.9 L1624.4 1340.4 L1625.4 1339.2 L1626.4 1341.1 L1626.8 1341.5 L1627.4 1341.7 L1628.4 1339.4 L1629.4 1340.4 L1630.4 1338.5 L1631.4 1337.7 L1632.4 1338.0 L1633.4 1335.9 L1634.4 1337.8 L1635.4 1337.7 L1636.4 1337.1 L1637.4 1338.6 L1638.4 1337.5 L1639.4 1337.9 L1640.4 1338.2 L1641.4 1338.9 L1642.4 1337.6 L1643.4 1338.3 L1644.4 1338.4 L1644.8 1338.8 L1645.4 1339.5 L1646.4 1338.1 L1647.4 1339.4 L1648.4 1338.3 L1649.4 1338.5 L1650.4 1337.9 L1651.4 1338.4 L1652.4 1339.6 L1653.4 1338.7 L1654.4 1339.0 L1655.4 1337.8 L1656.0 1337.7 L1656.4 1337.6 L1657.4 1338.3 L1658.4 1338.3 L1659.4 1338.6 L1660.4 1336.5 L1661.4 1338.2 L1662.4 1338.5 L1663.4 1337.5 L1664.4 1336.1 L1665.4 1336.7 L1666.4 1335.8 L1667.2 1336.2 L1667.4 1338.1 L1668.4 1337.6 L1669.4 1338.0 L1670.4 1338.6 L1671.4 1339.1 L1672.4 1338.6 L1673.4 1338.9 L1674.4 1339.2 L1675.4 1339.6 L1676.2 1339.6 L1676.4 1339.6 L1677.4 1337.8 L1678.4 1338.4 L1679.4 1337.2 L1680.4 1337.4 L1680.7 1335.5 L1681.4 1335.9 L1682.4 1335.8 L1683.4 1338.0 L1684.4 1338.6 L1685.4 1338.3 L1686.4 1337.8 L1687.4 1339.3 L1688.4 1339.5 L1689.4 1339.2 L1690.4 1338.7 L1691.4 1339.1 L1692.4 1339.7 L1693.4 1339.7 L1694.4 1340.2 L1695.4 1341.1 L1696.4 1342.1 L1697.4 1339.5 L1698.4 1340.5 L1699.4 1338.8 L1700.4 1338.7 L1701.4 1340.1 L1702.4 1339.2 L1703.4 1339.7 L1704.4 1338.2 L1705.4 1336.7 L1706.4 1337.3 L1706.5 1337.8 L1707.4 1338.7 L1708.4 1338.8 L1709.4 1337.4 L1710.4 1337.2 L1711.4 1336.3 L1712.4 1337.7 L1713.4 1336.5 L1714.4 1336.3 L1715.4 1335.9 L1716.4 1335.9 L1717.4 1337.6 L1718.4 1336.1 L1719.4 1338.2 L1720.0 1335.9 L1720.4 1338.2 L1721.4 1336.9 L1722.4 1337.2 L1723.4 1339.6 L1724.4 1339.0 L1725.4 1340.8 L1726.4 1340.0 L1726.7 1339.8 L1727.4 1341.2 L1728.4 1340.3 L1729.4 1340.0 L1730.4 1339.0 L1731.4 1336.6 L1732.3 1337.3 L1732.4 1337.6 L1733.4 1337.8 L1734.4 1339.8 L1735.4 1338.9 L1736.4 1341.5 L1737.4 1341.7 L1737.9 1340.2 L1738.4 1339.8 L1739.4 1340.7 L1740.4 1340.3 L1741.4 1337.6 L1742.4 1337.4 L1743.4 1337.7 L1743.5 1336.1 L1744.4 1338.2 L1745.4 1337.4 L1746.4 1336.6 L1747.4 1337.6 L1748.4 1338.4 L1749.4 1338.3 L1750.3 1339.2" stroke="#58a9d1" stroke-width="2.2" fill="none" stroke-linejoin="round"/></g>
<rect x="170.0" y="129.0" width="41.0" height="44.0" fill="#16ff16" fill-opacity="0.82" rx="1.5"/>
<text x="184.5" y="157.7" font-size="27" fill="#157015" textLength="21.1" lengthAdjust="spacingAndGlyphs">O</text>
<rect x="400.4" y="208.4" width="40.9" height="44.2" fill="#ff16ff" fill-opacity="0.82" rx="1.5"/>
<text x="414.8" y="237.3" font-size="27" fill="#701070" textLength="18.4" lengthAdjust="spacingAndGlyphs">Si</text>
<rect x="201.7" y="1090.6" width="49.3" height="44.0" fill="#ff8a16" fill-opacity="0.82" rx="1.5"/>
<text x="214.6" y="1119.7" font-size="27" fill="#603010" textLength="28.7" lengthAdjust="spacingAndGlyphs">Fe</text>
<rect x="298.8" y="840.5" width="62.4" height="44.5" fill="#1616ff" fill-opacity="0.82" rx="1.5"/>
<text x="312.1" y="870.0" font-size="27" fill="#ffffff" textLength="43.9" lengthAdjust="spacingAndGlyphs">Mg</text>
<rect x="350.6" y="1086.8" width="44.8" height="43.6" fill="#16ffff" fill-opacity="0.82" rx="1.5"/>
<text x="362.8" y="1115.3" font-size="27" fill="#156060" textLength="24.4" lengthAdjust="spacingAndGlyphs">Al</text>
<rect x="120.7" y="1241.0" width="52.2" height="43.3" fill="#ffff16" fill-opacity="0.82" rx="1.5"/>
<text x="134.7" y="1269.8" font-size="27" fill="#606010" textLength="32.7" lengthAdjust="spacingAndGlyphs">Ca</text>
<rect x="766.9" y="1213.0" width="52.3" height="43.8" fill="#ffff16" fill-opacity="0.82" rx="1.5"/>
<text x="780.5" y="1242.0" font-size="27" fill="#606010" textLength="32.9" lengthAdjust="spacingAndGlyphs">Ca</text>
<rect x="1284.7" y="1082.5" width="50.5" height="44.2" fill="#ff8a16" fill-opacity="0.82" rx="1.5"/>
<text x="1298.3" y="1111.7" font-size="27" fill="#603010" textLength="29.1" lengthAdjust="spacingAndGlyphs">Fe</text>
<rect x="940.5" y="67" width="800.5" height="600" fill="#000"/>
<defs><radialGradient id="sph2" gradientUnits="userSpaceOnUse" cx="1318" cy="330" r="250" fx="1300" fy="290"><stop offset="0" stop-color="#888888"/><stop offset="0.5" stop-color="#7f7f7f"/><stop offset="0.8" stop-color="#6d6d6d"/><stop offset="0.93" stop-color="#525252"/><stop offset="1" stop-color="#222222"/></radialGradient><filter id="bl1" x="-20%" y="-20%" width="140%" height="140%"><feGaussianBlur stdDeviation="0.9"/></filter><filter id="bl6" x="-50%" y="-50%" width="200%" height="200%"><feGaussianBlur stdDeviation="8"/></filter><filter id="bl3" x="-50%" y="-50%" width="200%" height="200%"><feGaussianBlur stdDeviation="3"/></filter><clipPath id="sphclip"><path d="M1305.0 83.4C1289.9 85.1 1273.2 88.5 1258.0 93.5C1242.8 98.5 1228.5 105.9 1214.0 113.7C1199.5 121.5 1183.8 129.9 1171.0 140.5C1158.2 151.1 1147.2 164.1 1137.0 177.5C1126.8 190.9 1117.2 205.3 1110.0 221.0C1102.8 236.7 1097.3 254.7 1093.5 271.5C1089.7 288.3 1087.6 305.2 1087.0 322.0C1086.4 338.8 1087.2 354.7 1090.0 372.0C1092.8 389.3 1097.4 408.1 1103.6 426.0C1109.8 443.9 1116.9 462.9 1127.0 479.7C1137.1 496.5 1150.0 513.3 1164.0 526.7C1178.0 540.1 1193.1 550.5 1211.0 560.0C1228.9 569.5 1250.2 578.2 1271.5 583.8C1292.8 589.4 1317.3 593.3 1338.6 593.8C1359.8 594.3 1379.4 592.0 1399.0 587.0C1418.6 582.0 1439.8 572.5 1456.0 563.6C1472.2 554.7 1484.7 545.2 1496.5 533.4C1508.3 521.6 1518.3 508.7 1526.7 493.0C1535.1 477.3 1541.2 457.8 1546.8 439.4C1552.3 420.9 1557.5 401.9 1560.0 382.3C1562.5 362.7 1563.8 342.1 1562.0 322.0C1560.2 301.9 1554.8 281.2 1549.0 262.0C1543.2 242.8 1536.0 224.0 1527.0 207.0C1518.0 190.0 1507.0 173.5 1495.0 160.0C1483.0 146.5 1471.0 137.1 1455.0 126.0C1439.0 114.9 1416.7 100.6 1399.0 93.5C1381.3 86.4 1364.4 85.1 1348.7 83.4C1333.0 81.7 1320.1 81.7 1305.0 83.4Z"/></clipPath></defs>
<path d="M1305.0 83.4C1289.9 85.1 1273.2 88.5 1258.0 93.5C1242.8 98.5 1228.5 105.9 1214.0 113.7C1199.5 121.5 1183.8 129.9 1171.0 140.5C1158.2 151.1 1147.2 164.1 1137.0 177.5C1126.8 190.9 1117.2 205.3 1110.0 221.0C1102.8 236.7 1097.3 254.7 1093.5 271.5C1089.7 288.3 1087.6 305.2 1087.0 322.0C1086.4 338.8 1087.2 354.7 1090.0 372.0C1092.8 389.3 1097.4 408.1 1103.6 426.0C1109.8 443.9 1116.9 462.9 1127.0 479.7C1137.1 496.5 1150.0 513.3 1164.0 526.7C1178.0 540.1 1193.1 550.5 1211.0 560.0C1228.9 569.5 1250.2 578.2 1271.5 583.8C1292.8 589.4 1317.3 593.3 1338.6 593.8C1359.8 594.3 1379.4 592.0 1399.0 587.0C1418.6 582.0 1439.8 572.5 1456.0 563.6C1472.2 554.7 1484.7 545.2 1496.5 533.4C1508.3 521.6 1518.3 508.7 1526.7 493.0C1535.1 477.3 1541.2 457.8 1546.8 439.4C1552.3 420.9 1557.5 401.9 1560.0 382.3C1562.5 362.7 1563.8 342.1 1562.0 322.0C1560.2 301.9 1554.8 281.2 1549.0 262.0C1543.2 242.8 1536.0 224.0 1527.0 207.0C1518.0 190.0 1507.0 173.5 1495.0 160.0C1483.0 146.5 1471.0 137.1 1455.0 126.0C1439.0 114.9 1416.7 100.6 1399.0 93.5C1381.3 86.4 1364.4 85.1 1348.7 83.4C1333.0 81.7 1320.1 81.7 1305.0 83.4Z" fill="url(#sph2)"/>
<g clip-path="url(#sphclip)">
<defs><radialGradient id="fadeD"><stop offset="0" stop-color="#000" stop-opacity="1"/><stop offset="1" stop-color="#000" stop-opacity="0"/></radialGradient><radialGradient id="fadeL"><stop offset="0" stop-color="#fff" stop-opacity="1"/><stop offset="1" stop-color="#fff" stop-opacity="0"/></radialGradient></defs>
<ellipse cx="1490" cy="510" rx="170" ry="140" fill="url(#fadeD)" opacity="0.35"/>
<ellipse cx="1300" cy="600" rx="220" ry="60" fill="url(#fadeD)" opacity="0.35"/>
<ellipse cx="1102" cy="374" rx="45" ry="75" fill="url(#fadeD)" opacity="0.6"/>
<path d="M1080 322L1100 320L1117 332L1131 358L1136 392L1131 418L1117 426L1099 416L1080 400Z" fill="#181818" opacity="0.85" filter="url(#bl3)"/>
<ellipse cx="1310" cy="250" rx="150" ry="130" fill="url(#fadeL)" opacity="0.08"/>
<defs><filter id="turb" x="0" y="0" width="100%" height="100%"><feTurbulence type="fractalNoise" baseFrequency="0.045" numOctaves="3" seed="5"/><feColorMatrix type="matrix" values="0 0 0 0 0.5  0 0 0 0 0.5  0 0 0 0 0.5  1.2 0 0 0 -0.45"/></filter></defs>
<rect x="1080" y="80" width="490" height="520" filter="url(#turb)" opacity="0.22" style="mix-blend-mode:overlay"/>
<path d="M1262 362C1266 390 1268 420 1275 462" stroke="#2a2a2a" stroke-width="2.5" fill="none" opacity="0.55" filter="url(#bl1)"/>
<g fill="#e6e6e6" filter="url(#bl1)"><rect x="1258.8" y="120.6" width="15.7" height="4.7" transform="rotate(-12 1266.6 123.0)" opacity="0.76"/><rect x="1238.7" y="118.1" width="12.6" height="5.7" transform="rotate(-18 1245.0 121.0)" opacity="0.66"/><rect x="1230.7" y="131.5" width="13.3" height="3.3" transform="rotate(-4 1237.3 133.2)" opacity="0.89"/><rect x="1279.1" y="123.6" width="7.7" height="3.2" transform="rotate(-12 1283.0 125.2)" opacity="0.57"/><rect x="1242.2" y="107.6" width="6.3" height="4.7" transform="rotate(-13 1245.4 109.9)" opacity="0.84"/><rect x="1266.4" y="123.6" width="11.2" height="5.3" transform="rotate(-13 1272.0 126.3)" opacity="0.65"/><rect x="1303.4" y="138.1" width="14.8" height="5.5" transform="rotate(-15 1310.8 140.8)" opacity="0.63"/><rect x="1246.4" y="100.6" width="14.0" height="4.5" transform="rotate(-6 1253.4 102.9)" opacity="0.69"/><rect x="1304.6" y="132.8" width="6.0" height="3.9" transform="rotate(-5 1307.6 134.7)" opacity="0.71"/><rect x="1306.0" y="113.7" width="6.8" height="5.2" transform="rotate(-8 1309.4 116.3)" opacity="0.64"/><rect x="1229.0" y="110.8" width="16.1" height="5.6" transform="rotate(-18 1237.1 113.6)" opacity="0.64"/><rect x="1231.0" y="100.6" width="14.4" height="3.8" transform="rotate(-11 1238.2 102.5)" opacity="0.71"/><rect x="1241.8" y="127.4" width="7.4" height="5.3" transform="rotate(-18 1245.4 130.0)" opacity="0.70"/><rect x="1239.1" y="108.2" width="16.2" height="5.8" transform="rotate(-15 1247.2 111.1)" opacity="0.86"/><rect x="1239.6" y="113.5" width="15.0" height="5.3" transform="rotate(-18 1247.1 116.2)" opacity="0.90"/><rect x="1240.2" y="108.5" width="14.1" height="4.3" transform="rotate(-15 1247.3 110.6)" opacity="0.58"/><rect x="1233.0" y="121.3" width="8.6" height="5.1" transform="rotate(-14 1237.3 123.9)" opacity="0.71"/><rect x="1301.7" y="116.8" width="12.0" height="6.0" transform="rotate(-17 1307.7 119.8)" opacity="0.60"/><rect x="1299.3" y="131.6" width="8.6" height="3.8" transform="rotate(-8 1303.6 133.5)" opacity="0.88"/><rect x="1238.3" y="136.4" width="15.3" height="5.1" transform="rotate(-13 1245.9 139.0)" opacity="0.59"/><rect x="1342.7" y="146.0" width="10.0" height="7.1" transform="rotate(8 1347.7 149.5)" opacity="0.84"/><rect x="1382.7" y="119.2" width="9.3" height="7.1" transform="rotate(5 1387.3 122.7)" opacity="0.63"/><rect x="1377.7" y="142.2" width="14.0" height="5.7" transform="rotate(19 1384.7 145.1)" opacity="0.62"/><rect x="1340.1" y="119.3" width="12.2" height="5.0" transform="rotate(7 1346.2 121.8)" opacity="0.68"/><rect x="1380.0" y="112.4" width="11.3" height="7.7" transform="rotate(20 1385.6 116.3)" opacity="0.78"/><rect x="1389.6" y="131.9" width="9.0" height="4.9" transform="rotate(4 1394.1 134.4)" opacity="0.87"/><rect x="1390.9" y="146.1" width="7.7" height="6.8" transform="rotate(12 1394.8 149.5)" opacity="0.81"/><rect x="1363.5" y="147.7" width="8.3" height="6.5" transform="rotate(16 1367.6 151.0)" opacity="0.87"/><rect x="1389.4" y="135.3" width="15.8" height="7.7" transform="rotate(10 1397.3 139.1)" opacity="0.79"/><rect x="1403.0" y="142.2" width="11.9" height="7.3" transform="rotate(18 1409.0 145.8)" opacity="0.75"/><rect x="1382.6" y="122.9" width="13.6" height="6.7" transform="rotate(5 1389.4 126.3)" opacity="0.77"/><rect x="1408.0" y="143.2" width="15.1" height="6.0" transform="rotate(16 1415.5 146.2)" opacity="0.75"/><rect x="1372.1" y="140.9" width="8.4" height="7.2" transform="rotate(4 1376.3 144.5)" opacity="0.76"/><rect x="1371.7" y="117.0" width="14.8" height="6.4" transform="rotate(14 1379.1 120.2)" opacity="0.87"/><rect x="1357.8" y="108.0" width="10.7" height="7.0" transform="rotate(7 1363.2 111.5)" opacity="0.61"/><rect x="1403.2" y="133.6" width="12.1" height="7.7" transform="rotate(9 1409.3 137.4)" opacity="0.78"/><rect x="1351.1" y="124.4" width="16.0" height="7.7" transform="rotate(18 1359.1 128.2)" opacity="0.68"/><rect x="1381.9" y="120.5" width="8.9" height="6.4" transform="rotate(17 1386.4 123.7)" opacity="0.85"/><rect x="1443.2" y="178.2" width="14.5" height="3.5" transform="rotate(37 1450.5 180.0)" opacity="0.65"/><rect x="1425.2" y="156.0" width="17.6" height="4.0" transform="rotate(35 1434.1 158.0)" opacity="0.84"/><rect x="1453.1" y="157.9" width="12.7" height="3.3" transform="rotate(44 1459.4 159.6)" opacity="0.56"/><rect x="1443.0" y="162.2" width="14.8" height="4.5" transform="rotate(30 1450.4 164.4)" opacity="0.60"/><rect x="1432.3" y="140.2" width="19.5" height="3.6" transform="rotate(32 1442.0 142.0)" opacity="0.57"/><rect x="1438.9" y="157.2" width="17.7" height="4.2" transform="rotate(43 1447.8 159.3)" opacity="0.89"/><rect x="1441.5" y="147.4" width="16.3" height="3.5" transform="rotate(30 1449.6 149.2)" opacity="0.72"/><polygon points="1164.2,173.4 1168.7,173.3 1170.4,177.4 1167.0,178.6" opacity="0.91"/><polygon points="1168.3,176.8 1171.3,169.8 1174.8,174.9" opacity="0.67"/><polygon points="1182.2,175.3 1178.4,176.8 1174.2,170.4 1177.2,168.7 1181.6,170.0" opacity="0.61"/><polygon points="1182.6,171.8 1179.4,168.7 1186.6,166.1" opacity="0.76"/><polygon points="1192.0,164.3 1194.8,167.3 1195.9,169.5 1191.7,172.8 1188.1,168.0" opacity="0.90"/><polygon points="1195.7,167.4 1192.5,164.6 1192.4,161.0 1197.2,158.9 1200.4,161.0" opacity="0.78"/><polygon points="1205.9,163.9 1198.2,166.7 1198.3,159.5 1202.4,158.6" opacity="0.72"/><polygon points="1208.4,165.4 1206.0,158.7 1209.4,157.0 1212.1,157.5 1212.0,163.6" opacity="0.72"/><polygon points="1217.2,149.7 1215.2,158.8 1209.2,154.7" opacity="0.89"/><polygon points="1216.0,148.4 1223.2,148.2 1225.1,153.0 1218.6,158.8 1216.1,155.0" opacity="0.92"/><polygon points="1225.5,149.6 1224.8,156.9 1219.9,149.3" opacity="0.85"/><polygon points="1134.0,193.9 1131.9,189.6 1135.5,188.4" opacity="0.78"/><polygon points="1140.6,195.9 1137.8,196.1 1138.4,194.4" opacity="0.66"/><polygon points="1141.2,204.2 1138.9,204.7 1137.2,203.3 1138.1,200.6 1140.4,200.1" opacity="0.90"/><polygon points="1144.4,209.7 1143.3,212.5 1140.7,212.6 1142.2,207.3" opacity="0.93"/><polygon points="1148.3,213.1 1150.1,217.3 1146.7,217.7 1145.6,214.2" opacity="0.84"/><polygon points="1152.3,227.4 1150.7,227.9 1150.4,223.7 1151.7,224.0 1153.6,226.2" opacity="0.68"/><polygon points="1155.0,229.9 1153.5,231.7 1152.4,231.1 1152.4,228.7 1153.5,228.6" opacity="0.67"/><polygon points="1154.0,235.4 1157.1,233.9 1158.2,237.0 1156.3,238.0" opacity="0.87"/><polygon points="1159.4,247.3 1157.9,248.7 1156.3,247.4 1157.3,245.8" opacity="0.79"/><polygon points="1149.2,185.1 1151.3,185.6 1152.8,188.3 1148.8,190.1 1148.1,186.3" opacity="0.95"/><polygon points="1154.7,190.4 1157.6,192.2 1155.8,196.7 1152.8,194.9" opacity="0.69"/><polygon points="1159.7,202.2 1156.5,200.7 1160.0,199.4" opacity="0.69"/><polygon points="1161.8,207.7 1164.0,209.4 1162.0,212.0 1158.9,211.5 1159.2,208.5" opacity="0.85"/><polygon points="1167.2,218.2 1163.8,215.1 1166.2,214.9" opacity="0.69"/><polygon points="1167.5,227.6 1167.0,226.3 1168.1,224.2 1169.1,224.7 1169.2,226.3" opacity="0.90"/><polygon points="1171.4,232.7 1173.6,230.3 1175.4,234.6" opacity="0.70"/><polygon points="1176.4,243.6 1176.1,241.5 1177.6,240.0 1178.8,241.6 1177.6,242.8" opacity="0.67"/><rect x="1120.7" y="224.3" width="12.9" height="4.4" transform="rotate(63 1127.2 226.4)" opacity="0.65"/><rect x="1103.5" y="236.1" width="14.2" height="3.8" transform="rotate(54 1110.6 238.0)" opacity="0.80"/><rect x="1116.8" y="259.2" width="14.8" height="4.7" transform="rotate(59 1124.2 261.6)" opacity="0.83"/><rect x="1109.2" y="234.0" width="13.2" height="4.7" transform="rotate(66 1115.8 236.3)" opacity="0.64"/><rect x="1111.0" y="236.4" width="13.1" height="3.8" transform="rotate(58 1117.6 238.4)" opacity="0.62"/><rect x="1117.2" y="254.2" width="13.6" height="4.5" transform="rotate(61 1124.0 256.5)" opacity="0.61"/><rect x="1123.9" y="258.4" width="12.8" height="3.2" transform="rotate(60 1130.3 260.0)" opacity="0.74"/><rect x="1117.2" y="261.3" width="14.0" height="4.5" transform="rotate(53 1124.2 263.6)" opacity="0.74"/><rect x="1125.1" y="224.3" width="12.2" height="4.4" transform="rotate(66 1131.2 226.5)" opacity="0.58"/><rect x="1114.3" y="199.5" width="12.4" height="4.2" transform="rotate(51 1120.5 201.6)" opacity="0.63"/><rect x="1117.7" y="209.1" width="12.4" height="3.8" transform="rotate(52 1123.9 211.0)" opacity="0.89"/><rect x="1115.8" y="208.2" width="11.4" height="4.4" transform="rotate(58 1121.5 210.3)" opacity="0.87"/><rect x="1108.7" y="216.4" width="12.0" height="4.6" transform="rotate(60 1114.7 218.7)" opacity="0.84"/><rect x="1121.2" y="219.9" width="11.9" height="4.0" transform="rotate(58 1127.1 221.9)" opacity="0.83"/><polygon points="1192.2,232.0 1187.6,230.9 1186.3,225.6 1191.7,223.0 1194.0,227.0" opacity="0.65"/><polygon points="1200.0,234.7 1206.3,234.3 1204.1,243.2" opacity="0.85"/><polygon points="1188.5,224.7 1191.4,217.5 1199.4,219.7 1197.1,226.6" opacity="0.93"/><polygon points="1193.9,237.6 1196.9,229.0 1200.4,238.2" opacity="0.88"/><polygon points="1185.1,235.0 1185.7,245.1 1174.2,243.3 1173.8,232.8" opacity="0.88"/><circle cx="1216.0" cy="246.0" r="5.0" opacity="0.85"/><polygon points="1249.4,199.8 1248.6,208.4 1240.1,204.9" opacity="0.77"/><polygon points="1252.6,217.7 1251.4,210.4 1255.9,206.6 1262.1,208.4 1264.0,215.3" opacity="0.71"/><polygon points="1248.2,193.4 1256.6,191.3 1254.5,203.2 1247.2,197.8" opacity="0.76"/><polygon points="1319.7,212.3 1331.8,207.4 1333.5,215.7 1323.1,221.5" opacity="0.79"/><polygon points="1322.8,208.9 1316.3,213.7 1308.2,208.8 1313.6,199.4 1319.8,202.5" opacity="0.82"/><polygon points="1290.2,232.3 1294.2,225.5 1300.7,230.8" opacity="0.74"/><polygon points="1299.3,237.7 1291.0,239.7 1289.3,230.8 1296.0,227.7 1302.0,230.7" opacity="0.69"/><polygon points="1261.2,243.6 1260.7,233.0 1273.5,241.9" opacity="0.81"/><polygon points="1309.3,268.5 1302.9,262.3 1305.0,249.6 1316.1,251.6 1314.8,261.5" opacity="0.83"/><polygon points="1188.7,258.9 1195.4,262.3 1195.0,269.0 1186.7,267.6" opacity="0.79"/><polygon points="1195.6,273.5 1194.4,276.5 1187.9,276.5 1187.3,271.0 1192.9,269.8" opacity="0.79"/><polygon points="1192.2,280.5 1186.6,279.0 1185.5,274.7 1188.6,272.8 1192.8,273.5" opacity="0.64"/><polygon points="1188.5,282.9 1194.9,280.5 1194.4,288.7" opacity="0.81"/><polygon points="1189.9,289.4 1195.7,286.4 1199.3,291.3 1194.8,294.3 1191.3,296.6" opacity="0.72"/><polygon points="1193.8,300.3 1192.7,295.0 1199.6,297.1" opacity="0.91"/><polygon points="1197.7,304.9 1194.1,309.7 1189.5,305.8 1195.4,300.1" opacity="0.86"/><polygon points="1199.5,304.0 1204.8,309.9 1202.1,314.1 1195.8,313.2 1197.2,306.8" opacity="0.69"/><polygon points="1198.1,312.4 1199.3,316.7 1196.8,320.2 1193.4,314.6" opacity="0.93"/><polygon points="1203.5,320.7 1205.7,325.1 1199.1,324.0 1198.2,319.3" opacity="0.80"/><polygon points="1195.4,322.9 1204.8,328.9 1197.7,334.3" opacity="0.72"/><circle cx="1243.0" cy="274.0" r="4.0" opacity="0.56"/><circle cx="1169.0" cy="306.0" r="3.0" opacity="0.59"/><circle cx="1249.0" cy="320.0" r="4.0" opacity="0.60"/><circle cx="1215.0" cy="315.0" r="5.0" opacity="0.68"/><polygon points="1317.1,327.3 1315.4,316.8 1325.0,320.3" opacity="0.62"/><polygon points="1317.4,311.5 1309.6,314.5 1304.3,308.8 1309.1,299.4 1313.0,302.6" opacity="0.86"/><polygon points="1312.6,328.9 1299.6,328.6 1301.8,317.7" opacity="0.89"/><polygon points="1441.7,283.7 1435.8,282.2 1432.6,275.0 1443.4,270.5 1446.8,275.8" opacity="0.68"/><polygon points="1441.5,257.4 1438.2,264.4 1433.3,263.6 1433.4,256.7 1439.2,254.0" opacity="0.61"/><polygon points="1412.4,242.6 1416.8,246.8 1415.8,254.2 1407.6,251.3 1408.2,244.8" opacity="0.89"/><polygon points="1412.7,246.0 1418.0,246.1 1420.6,253.8 1413.6,254.4 1409.5,251.0" opacity="0.65"/><polygon points="1444.7,266.6 1439.9,258.3 1450.7,257.5" opacity="0.61"/><polygon points="1460.0,278.8 1456.0,266.5 1465.3,267.3" opacity="0.93"/><polygon points="1451.8,246.6 1460.6,244.5 1462.2,251.9 1456.0,254.3 1450.8,249.5" opacity="0.87"/><polygon points="1419.3,249.3 1424.1,254.8 1419.3,259.4 1413.8,256.3 1413.1,250.8" opacity="0.75"/><polygon points="1415.0,250.6 1411.3,261.0 1402.4,253.7 1403.8,248.0 1413.4,246.5" opacity="0.87"/><polygon points="1448.1,270.0 1448.9,277.3 1440.8,279.1 1440.1,273.4" opacity="0.77"/><polygon points="1399.7,264.3 1398.3,260.5 1403.0,261.2" opacity="0.83"/><polygon points="1408.1,266.8 1409.0,264.0 1411.6,263.0 1413.4,265.4 1409.8,267.8" opacity="0.60"/><polygon points="1425.9,270.5 1422.7,276.8 1421.6,270.9" opacity="0.82"/><polygon points="1427.7,275.4 1431.2,274.3 1430.5,278.1" opacity="0.87"/><polygon points="1440.2,284.2 1438.2,281.2 1441.2,279.0 1443.2,280.4 1442.7,283.7" opacity="0.74"/><polygon points="1450.0,283.9 1452.0,284.6 1450.5,288.4 1446.0,285.8" opacity="0.82"/><rect x="1495.7" y="239.6" width="16.2" height="3.2" transform="rotate(23 1503.8 241.2)" opacity="0.63"/><rect x="1489.2" y="218.3" width="15.1" height="4.2" transform="rotate(13 1496.7 220.4)" opacity="0.57"/><rect x="1497.5" y="247.0" width="16.4" height="3.8" transform="rotate(25 1505.7 248.9)" opacity="0.79"/><rect x="1493.8" y="250.5" width="14.9" height="3.2" transform="rotate(22 1501.3 252.1)" opacity="0.64"/><rect x="1493.4" y="230.3" width="15.1" height="4.7" transform="rotate(28 1500.9 232.6)" opacity="0.55"/><rect x="1499.7" y="275.6" width="15.8" height="3.3" transform="rotate(25 1507.6 277.3)" opacity="0.86"/><rect x="1503.7" y="271.9" width="14.3" height="3.4" transform="rotate(12 1510.9 273.6)" opacity="0.83"/><rect x="1492.8" y="243.4" width="14.0" height="3.5" transform="rotate(15 1499.8 245.1)" opacity="0.67"/><rect x="1503.7" y="272.2" width="14.4" height="3.9" transform="rotate(18 1510.9 274.2)" opacity="0.78"/><rect x="1499.2" y="260.7" width="14.6" height="4.3" transform="rotate(27 1506.5 262.9)" opacity="0.81"/><rect x="1507.2" y="284.9" width="16.0" height="4.6" transform="rotate(17 1515.2 287.2)" opacity="0.85"/><circle cx="1485.0" cy="216.0" r="5.0" opacity="0.72"/><rect x="1533.2" y="248.0" width="7.0" height="24.9" transform="rotate(9 1536.7 260.5)" opacity="0.79"/><rect x="1531.7" y="251.7" width="7.1" height="26.8" transform="rotate(-0 1535.3 265.0)" opacity="0.85"/><polygon points="1366.8,305.9 1372.4,306.0 1373.8,310.8 1367.7,311.5" opacity="0.94"/><polygon points="1378.0,310.5 1374.2,302.8 1381.5,305.1" opacity="0.66"/><polygon points="1386.9,301.4 1388.7,303.6 1386.4,308.2 1382.7,305.0" opacity="0.88"/><polygon points="1388.1,302.0 1388.7,295.9 1392.1,293.1 1396.5,298.5 1392.3,303.9" opacity="0.91"/><polygon points="1389.0,294.3 1395.9,290.7 1399.4,297.0 1394.0,298.8" opacity="0.62"/><polygon points="1401.8,297.4 1402.6,289.6 1406.1,291.9" opacity="0.80"/><polygon points="1408.1,293.9 1401.9,292.6 1403.7,284.4 1408.8,284.0 1411.0,292.9" opacity="0.84"/><polygon points="1407.8,287.2 1414.1,284.2 1413.8,291.3" opacity="0.88"/><polygon points="1421.4,281.7 1424.5,285.9 1421.1,289.2 1416.4,286.8 1415.8,283.1" opacity="0.74"/><polygon points="1420.2,280.4 1426.1,278.3 1426.4,287.0 1421.3,287.1" opacity="0.62"/><polygon points="1431.5,280.4 1426.6,281.2 1425.2,276.7 1430.2,275.5" opacity="0.93"/><rect x="1357.0" y="281.8" width="4.5" height="50.4" transform="rotate(9 1359.2 307.1)" opacity="0.90"/><polygon points="1340.0,303.0 1341.3,306.7 1335.1,311.7 1333.9,305.7" opacity="0.60"/><polygon points="1344.6,317.7 1338.5,307.6 1347.7,306.9" opacity="0.64"/><polygon points="1344.0,315.7 1345.8,312.2 1350.6,310.5 1352.4,317.8 1348.7,319.1" opacity="0.62"/><polygon points="1349.2,315.4 1354.1,321.4 1349.6,323.3 1346.3,318.9" opacity="0.68"/><polygon points="1359.5,318.7 1363.5,328.9 1352.7,326.0" opacity="0.88"/><polygon points="1355.5,328.9 1360.5,325.0 1362.3,336.4" opacity="0.63"/><circle cx="1351.9" cy="321.0" r="2.9" opacity="0.84"/><circle cx="1337.2" cy="336.0" r="2.8" opacity="0.56"/><circle cx="1346.3" cy="335.8" r="3.0" opacity="0.58"/><circle cx="1344.8" cy="327.1" r="2.6" opacity="0.51"/><circle cx="1358.2" cy="327.9" r="2.5" opacity="0.53"/><circle cx="1357.1" cy="329.0" r="2.3" opacity="0.83"/><polygon points="1488.1,316.3 1478.4,324.3 1469.7,314.7 1478.9,309.7" opacity="0.84"/><polygon points="1458.9,298.6 1470.1,298.0 1467.3,306.2 1460.2,307.0" opacity="0.65"/><polygon points="1469.6,318.4 1460.1,313.1 1469.8,303.2 1475.3,311.1" opacity="0.91"/><polygon points="1487.8,295.1 1477.9,307.6 1471.9,297.6" opacity="0.70"/><polygon points="1467.4,331.2 1465.1,337.7 1456.1,332.1 1458.0,327.7 1468.0,323.9" opacity="0.64"/><polygon points="1476.8,310.8 1467.3,321.8 1461.5,309.8 1471.0,307.6" opacity="0.63"/><polygon points="1112.5,348.5 1121.3,351.5 1124.1,358.3 1118.1,365.0 1113.2,361.4" opacity="0.74"/><polygon points="1115.2,347.9 1124.6,340.6 1131.1,355.8" opacity="0.84"/><polygon points="1141.1,371.4 1143.9,366.8 1156.1,364.2 1154.1,377.1 1148.7,381.7" opacity="0.94"/><polygon points="1163.9,420.8 1160.7,422.9 1155.5,418.0 1159.7,413.6 1164.1,415.0" opacity="0.76"/><polygon points="1167.5,410.4 1168.3,416.8 1159.9,414.2" opacity="0.85"/><polygon points="1170.1,406.6 1172.2,410.8 1167.8,412.3" opacity="0.94"/><polygon points="1178.0,407.4 1175.2,402.3 1180.0,401.4 1181.2,406.2" opacity="0.65"/><polygon points="1184.4,400.9 1182.4,398.5 1184.8,395.0 1188.7,395.9 1190.3,399.3" opacity="0.62"/><polygon points="1188.7,387.5 1194.9,389.9 1187.2,393.7" opacity="0.86"/><polygon points="1192.7,381.7 1195.8,381.3 1198.5,383.7 1195.5,387.6 1191.7,386.8" opacity="0.86"/><polygon points="1201.7,372.7 1201.6,376.7 1197.7,378.6 1195.8,375.1" opacity="0.69"/><polygon points="1200.8,368.0 1206.7,366.7 1207.6,374.2 1202.5,371.6" opacity="0.93"/><polygon points="1189.9,403.7 1195.1,395.2 1198.1,398.5 1199.4,404.7 1193.5,408.0" opacity="0.88"/><polygon points="1185.9,416.5 1173.6,428.2 1170.4,414.6" opacity="0.83"/><polygon points="1153.0,416.3 1159.9,413.4 1162.6,417.6 1156.1,425.1" opacity="0.92"/><polygon points="1183.6,412.3 1176.5,412.4 1175.6,405.6 1183.8,402.1" opacity="0.78"/><polygon points="1172.3,392.6 1179.6,402.0 1172.6,410.5 1166.1,401.7" opacity="0.62"/><polygon points="1204.4,408.1 1214.2,417.7 1200.5,417.2" opacity="0.77"/><polygon points="1156.5,414.1 1163.6,407.3 1170.1,411.9 1164.4,419.8" opacity="0.72"/><polygon points="1283.4,336.8 1281.8,345.1 1269.5,341.5" opacity="0.73"/><polygon points="1272.9,327.1 1282.4,329.1 1289.6,340.8 1274.2,341.5" opacity="0.80"/><polygon points="1281.7,331.8 1277.5,342.0 1273.1,338.2 1276.2,330.3" opacity="0.86"/><polygon points="1302.4,356.0 1293.0,357.0 1289.4,349.0 1302.0,342.0" opacity="0.78"/><polygon points="1294.4,350.6 1290.2,352.8 1283.3,345.7 1285.5,335.8 1297.1,338.0" opacity="0.62"/><polygon points="1297.9,343.1 1288.2,339.8 1289.0,333.2 1295.5,330.4 1301.8,333.7" opacity="0.92"/><polygon points="1310.8,339.4 1297.6,337.4 1302.7,330.6" opacity="0.72"/><circle cx="1313.0" cy="414.1" r="2.4" opacity="0.83"/><circle cx="1325.7" cy="410.2" r="2.3" opacity="0.51"/><circle cx="1300.9" cy="397.4" r="2.0" opacity="0.71"/><circle cx="1307.9" cy="413.8" r="1.3" opacity="0.68"/><circle cx="1327.7" cy="370.5" r="1.3" opacity="0.80"/><circle cx="1327.6" cy="370.2" r="1.2" opacity="0.79"/><circle cx="1312.2" cy="393.9" r="1.9" opacity="0.77"/><circle cx="1319.0" cy="369.0" r="1.3" opacity="0.78"/><circle cx="1328.6" cy="409.0" r="1.7" opacity="0.62"/><circle cx="1292.8" cy="369.7" r="2.1" opacity="0.59"/><circle cx="1306.4" cy="394.3" r="1.6" opacity="0.74"/><circle cx="1298.9" cy="380.3" r="2.3" opacity="0.56"/><circle cx="1281.5" cy="381.2" r="1.8" opacity="0.77"/><circle cx="1292.0" cy="380.4" r="2.0" opacity="0.59"/><circle cx="1302.8" cy="381.2" r="2.3" opacity="0.56"/><circle cx="1286.2" cy="383.5" r="1.6" opacity="0.75"/><circle cx="1311.4" cy="406.9" r="1.8" opacity="0.53"/><circle cx="1316.5" cy="380.7" r="1.5" opacity="0.65"/><circle cx="1329.4" cy="386.8" r="1.6" opacity="0.82"/><circle cx="1329.5" cy="387.6" r="1.4" opacity="0.78"/><circle cx="1317.6" cy="385.2" r="2.1" opacity="0.63"/><circle cx="1289.4" cy="397.5" r="2.1" opacity="0.67"/><circle cx="1319.6" cy="369.7" r="1.8" opacity="0.63"/><circle cx="1276.7" cy="412.9" r="1.4" opacity="0.57"/><circle cx="1323.1" cy="415.1" r="2.3" opacity="0.62"/><circle cx="1326.1" cy="375.8" r="2.1" opacity="0.83"/><circle cx="1284.0" cy="375.5" r="2.0" opacity="0.81"/><circle cx="1314.4" cy="414.6" r="1.7" opacity="0.63"/><circle cx="1279.8" cy="382.1" r="2.3" opacity="0.53"/><circle cx="1283.5" cy="385.7" r="1.3" opacity="0.61"/><circle cx="1283.4" cy="374.9" r="1.8" opacity="0.69"/><circle cx="1305.4" cy="405.6" r="1.8" opacity="0.83"/><circle cx="1277.6" cy="379.7" r="1.3" opacity="0.61"/><circle cx="1316.4" cy="413.4" r="1.8" opacity="0.56"/><circle cx="1291.8" cy="396.3" r="1.6" opacity="0.78"/><circle cx="1328.4" cy="391.1" r="1.9" opacity="0.80"/><circle cx="1299.5" cy="378.2" r="2.3" opacity="0.84"/><circle cx="1274.4" cy="405.6" r="1.7" opacity="0.52"/><circle cx="1282.3" cy="377.3" r="2.1" opacity="0.57"/><circle cx="1274.1" cy="379.5" r="2.2" opacity="0.67"/><circle cx="1310.2" cy="391.3" r="1.4" opacity="0.51"/><circle cx="1290.3" cy="371.0" r="1.5" opacity="0.72"/><circle cx="1294.1" cy="391.7" r="1.9" opacity="0.61"/><circle cx="1293.3" cy="411.4" r="1.9" opacity="0.65"/><circle cx="1303.8" cy="391.1" r="1.6" opacity="0.82"/><circle cx="1286.3" cy="413.9" r="2.2" opacity="0.81"/><circle cx="1282.3" cy="393.4" r="2.4" opacity="0.60"/><circle cx="1282.7" cy="403.7" r="1.5" opacity="0.70"/><circle cx="1282.0" cy="414.5" r="1.5" opacity="0.53"/><circle cx="1312.2" cy="385.7" r="1.9" opacity="0.67"/><polygon points="1239.0,428.0 1252.4,436.9 1242.9,442.0" opacity="0.82"/><polygon points="1198.8,446.5 1198.7,439.9 1205.5,440.7 1206.4,445.6 1203.3,447.7" opacity="0.93"/><polygon points="1208.4,450.6 1209.3,445.0 1218.3,447.9 1215.3,454.8 1209.2,454.9" opacity="0.88"/><polygon points="1217.1,448.0 1227.7,454.9 1222.8,460.4 1215.5,454.5" opacity="0.93"/><polygon points="1232.7,464.0 1230.6,468.2 1222.7,462.8 1228.7,459.9" opacity="0.85"/><polygon points="1227.5,463.5 1236.5,464.9 1232.9,472.0" opacity="0.66"/><polygon points="1241.4,465.5 1247.5,470.2 1238.4,474.6" opacity="0.93"/><polygon points="1242.8,477.6 1248.8,474.7 1253.0,478.5 1245.5,482.7" opacity="0.63"/><polygon points="1258.7,486.0 1252.7,482.5 1253.8,477.6 1260.1,474.7 1262.3,483.9" opacity="0.75"/><polygon points="1267.5,490.1 1257.6,486.6 1265.4,479.8" opacity="0.92"/><polygon points="1277.7,495.5 1267.9,497.8 1262.3,490.8 1266.9,485.2 1274.4,487.0" opacity="0.61"/><polygon points="1280.1,502.8 1271.9,497.2 1273.4,489.6 1284.4,495.4" opacity="0.77"/><polygon points="1285.5,498.2 1291.2,503.3 1285.4,507.9" opacity="0.61"/><polygon points="1293.4,513.7 1285.4,504.2 1295.8,505.7" opacity="0.72"/><polygon points="1291.8,520.1 1291.6,512.4 1300.6,510.9 1303.2,515.5 1299.1,520.6" opacity="0.82"/><polygon points="1307.0,512.3 1313.6,518.6 1307.6,525.5 1299.7,516.6" opacity="0.63"/><polygon points="1311.0,518.6 1316.5,520.1 1318.1,526.4 1311.3,527.9 1309.6,523.7" opacity="0.75"/><polygon points="1327.2,522.6 1324.1,534.1 1319.5,528.1" opacity="0.68"/><polygon points="1215.8,456.8 1221.6,460.9 1217.5,471.7 1208.4,467.4 1208.0,460.7" opacity="0.85"/><polygon points="1236.2,472.5 1230.9,482.2 1223.5,482.8 1222.9,471.3 1227.1,471.7" opacity="0.76"/><polygon points="1206.1,487.6 1203.8,482.5 1213.3,480.9 1212.5,487.4" opacity="0.73"/><polygon points="1201.7,464.7 1203.9,457.1 1208.3,458.2 1214.1,464.6 1210.8,466.1" opacity="0.61"/><polygon points="1187.3,486.0 1188.0,497.6 1179.2,496.1 1179.1,489.3" opacity="0.75"/><polygon points="1224.4,499.1 1213.7,496.2 1219.7,486.2 1229.6,490.5" opacity="0.92"/><polygon points="1147.1,447.4 1146.1,440.9 1148.8,438.7 1157.8,442.7 1153.8,450.1" opacity="0.84"/><polygon points="1158.8,441.1 1160.8,435.7 1162.9,434.3 1168.5,437.4 1168.5,442.4" opacity="0.84"/><polygon points="1136.9,455.9 1132.4,461.0 1129.9,460.1 1129.7,453.4 1133.9,451.9" opacity="0.63"/><polygon points="1152.7,438.0 1158.2,443.2 1153.0,449.5 1145.8,448.8 1147.0,438.5" opacity="0.90"/><polygon points="1133.1,444.5 1138.2,447.2 1131.7,455.7 1125.3,452.4 1126.7,446.2" opacity="0.79"/><polygon points="1213.9,541.9 1200.6,543.1 1204.4,532.2" opacity="0.78"/><polygon points="1214.8,513.7 1209.5,523.9 1202.1,513.3" opacity="0.81"/><polygon points="1191.2,516.7 1198.1,511.8 1201.1,521.2" opacity="0.80"/><polygon points="1425.0,340.6 1423.8,347.8 1411.5,350.2 1411.8,339.9 1413.6,333.5" opacity="0.68"/><polygon points="1406.1,358.0 1397.2,363.6 1392.7,348.2 1397.1,341.1 1409.7,346.9" opacity="0.82"/><polygon points="1437.1,338.8 1435.3,352.0 1423.9,348.5 1424.1,337.7" opacity="0.67"/><polygon points="1391.2,361.1 1387.7,343.9 1400.5,341.7 1406.7,355.1" opacity="0.62"/><polygon points="1421.5,361.2 1403.7,357.4 1418.6,345.6" opacity="0.81"/><polygon points="1393.6,341.7 1403.8,336.1 1408.9,343.9 1409.0,350.6 1392.3,349.5" opacity="0.86"/><polygon points="1427.7,369.1 1413.4,370.6 1424.8,359.4" opacity="0.62"/><polygon points="1332.1,467.8 1342.0,466.6 1338.5,475.6" opacity="0.62"/><polygon points="1338.4,462.1 1344.2,460.8 1346.3,466.1 1341.8,467.4" opacity="0.91"/><polygon points="1352.3,459.9 1345.2,461.4 1344.5,453.8 1346.4,451.3 1354.0,454.3" opacity="0.84"/><polygon points="1354.1,441.8 1361.7,450.2 1355.6,453.8 1349.8,445.5" opacity="0.80"/><polygon points="1360.6,451.1 1357.2,446.9 1359.6,439.6 1365.6,441.2 1369.3,447.7" opacity="0.74"/><polygon points="1364.8,445.0 1357.5,435.4 1369.5,434.0" opacity="0.72"/><polygon points="1366.6,425.1 1371.3,424.8 1371.1,433.2 1366.9,431.7" opacity="0.77"/><polygon points="1375.9,427.8 1376.8,419.7 1386.0,424.0" opacity="0.67"/><polygon points="1386.8,413.6 1387.7,419.1 1382.1,419.5 1382.8,413.8" opacity="0.84"/><polygon points="1393.4,406.7 1390.5,414.1 1382.9,412.5 1386.2,406.8" opacity="0.63"/><polygon points="1395.0,399.8 1403.3,404.3 1398.9,414.1 1392.1,407.9" opacity="0.87"/><polygon points="1406.4,394.5 1406.6,400.2 1400.8,402.0 1400.5,397.3" opacity="0.94"/><polygon points="1411.6,383.7 1414.8,392.2 1408.3,395.4 1407.0,388.0" opacity="0.74"/><polygon points="1409.0,386.8 1415.9,383.3 1413.8,391.4" opacity="0.92"/><polygon points="1427.2,380.5 1418.9,377.6 1423.8,374.1" opacity="0.76"/><polygon points="1421.5,394.7 1436.4,398.2 1427.6,409.7 1412.4,400.7" opacity="0.89"/><polygon points="1447.8,398.2 1449.4,411.7 1431.9,406.2 1434.9,396.9" opacity="0.92"/><polygon points="1439.5,393.8 1438.5,406.5 1423.8,400.2" opacity="0.81"/><polygon points="1409.9,402.6 1409.5,412.0 1401.9,414.4 1396.9,402.0 1402.6,400.2" opacity="0.68"/><polygon points="1417.3,400.8 1427.4,397.9 1430.4,408.9 1425.4,413.1 1418.9,410.9" opacity="0.83"/><polygon points="1408.1,400.5 1416.0,404.2 1416.4,411.4 1405.0,420.4 1401.4,411.8" opacity="0.64"/><polygon points="1389.3,412.5 1400.7,410.3 1399.8,429.0" opacity="0.88"/><polygon points="1368.2,432.8 1358.1,436.5 1352.4,430.4 1362.2,421.5" opacity="0.61"/><polygon points="1340.3,424.8 1350.4,416.5 1349.5,434.5" opacity="0.64"/><polygon points="1352.3,428.0 1344.6,436.8 1334.5,425.4 1345.2,416.2 1351.8,421.8" opacity="0.87"/><circle cx="1474.5" cy="349.8" r="2.3" opacity="0.64"/><circle cx="1465.9" cy="384.2" r="2.5" opacity="0.70"/><circle cx="1481.2" cy="391.2" r="1.6" opacity="0.55"/><circle cx="1439.6" cy="349.9" r="2.9" opacity="0.61"/><circle cx="1461.6" cy="368.9" r="2.3" opacity="0.60"/><circle cx="1480.6" cy="360.6" r="2.8" opacity="0.78"/><circle cx="1437.1" cy="374.0" r="1.6" opacity="0.81"/><circle cx="1440.9" cy="356.6" r="2.7" opacity="0.71"/><circle cx="1474.3" cy="365.6" r="2.3" opacity="0.57"/><circle cx="1462.9" cy="356.0" r="2.5" opacity="0.54"/><circle cx="1444.7" cy="352.2" r="2.3" opacity="0.70"/><circle cx="1437.2" cy="401.2" r="2.8" opacity="0.63"/><circle cx="1445.9" cy="391.2" r="3.0" opacity="0.56"/><circle cx="1479.3" cy="390.7" r="2.9" opacity="0.57"/><circle cx="1443.7" cy="350.2" r="1.8" opacity="0.82"/><circle cx="1488.0" cy="369.4" r="1.7" opacity="0.62"/><circle cx="1450.5" cy="380.2" r="2.6" opacity="0.77"/><circle cx="1461.5" cy="368.3" r="2.2" opacity="0.63"/><circle cx="1462.5" cy="382.5" r="2.6" opacity="0.61"/><circle cx="1468.7" cy="349.0" r="1.6" opacity="0.64"/><circle cx="1457.1" cy="342.0" r="1.6" opacity="0.65"/><circle cx="1489.8" cy="391.9" r="1.5" opacity="0.61"/><circle cx="1457.6" cy="359.3" r="1.7" opacity="0.71"/><circle cx="1484.0" cy="363.7" r="1.8" opacity="0.54"/><circle cx="1437.8" cy="387.5" r="1.8" opacity="0.75"/><circle cx="1481.3" cy="345.2" r="1.8" opacity="0.61"/><circle cx="1480.1" cy="385.7" r="2.0" opacity="0.66"/><circle cx="1456.9" cy="369.2" r="2.7" opacity="0.59"/><circle cx="1482.4" cy="397.0" r="2.4" opacity="0.84"/><circle cx="1489.5" cy="350.6" r="3.0" opacity="0.57"/><circle cx="1482.1" cy="347.5" r="2.0" opacity="0.65"/><circle cx="1484.0" cy="382.2" r="1.8" opacity="0.81"/><circle cx="1485.5" cy="371.6" r="1.6" opacity="0.60"/><circle cx="1453.4" cy="366.0" r="2.9" opacity="0.71"/><circle cx="1482.9" cy="344.4" r="1.9" opacity="0.76"/><circle cx="1456.1" cy="354.1" r="1.6" opacity="0.52"/><circle cx="1460.1" cy="373.9" r="2.1" opacity="0.70"/><circle cx="1453.3" cy="341.0" r="2.5" opacity="0.62"/><circle cx="1464.5" cy="363.4" r="1.9" opacity="0.52"/><circle cx="1453.6" cy="358.5" r="1.7" opacity="0.51"/><circle cx="1463.9" cy="341.2" r="2.8" opacity="0.63"/><circle cx="1461.8" cy="372.6" r="1.5" opacity="0.54"/><circle cx="1481.0" cy="374.5" r="2.2" opacity="0.62"/><circle cx="1479.1" cy="371.2" r="2.7" opacity="0.79"/><circle cx="1487.1" cy="385.0" r="2.5" opacity="0.66"/><rect x="1529.2" y="349.2" width="11.4" height="4.5" transform="rotate(66 1534.9 351.4)" opacity="0.57"/><rect x="1534.7" y="350.5" width="11.7" height="4.7" transform="rotate(53 1540.6 352.8)" opacity="0.72"/><rect x="1525.9" y="363.0" width="9.7" height="4.1" transform="rotate(54 1530.8 365.1)" opacity="0.81"/><rect x="1528.5" y="354.9" width="10.4" height="4.6" transform="rotate(52 1533.7 357.2)" opacity="0.63"/><rect x="1533.8" y="360.7" width="12.5" height="3.6" transform="rotate(53 1540.1 362.5)" opacity="0.80"/><rect x="1533.4" y="330.2" width="13.2" height="4.0" transform="rotate(53 1540.0 332.2)" opacity="0.72"/><rect x="1525.9" y="391.7" width="13.0" height="4.7" transform="rotate(54 1532.4 394.1)" opacity="0.71"/><rect x="1526.8" y="403.6" width="9.5" height="3.7" transform="rotate(59 1531.6 405.4)" opacity="0.72"/><rect x="1527.0" y="401.6" width="13.2" height="4.7" transform="rotate(67 1533.7 403.9)" opacity="0.84"/><polygon points="1446.3,432.6 1450.5,425.3 1461.2,423.7 1462.4,441.7 1450.7,441.0" opacity="0.53"/><polygon points="1456.7,437.7 1445.5,435.3 1439.0,424.6 1447.7,419.2 1458.9,421.0" opacity="0.60"/><polygon points="1478.7,436.5 1466.0,433.0 1481.8,419.8" opacity="0.60"/><polygon points="1480.0,449.8 1487.6,460.6 1475.7,469.3 1468.8,461.3 1472.7,447.4" opacity="0.61"/><polygon points="1473.0,414.5 1483.0,419.7 1482.8,435.7 1474.9,439.2 1465.8,421.6" opacity="0.54"/><polygon points="1485.2,447.1 1503.4,455.8 1488.4,460.6" opacity="0.60"/><polygon points="1440.5,448.9 1447.6,443.4 1456.5,448.7 1453.0,455.4 1442.6,454.5" opacity="0.55"/><polygon points="1402.4,515.4 1404.0,520.5 1399.2,524.2 1395.6,521.4 1397.9,517.7" opacity="0.71"/><polygon points="1405.2,518.6 1399.2,519.8 1397.8,515.5 1402.7,513.0" opacity="0.82"/><polygon points="1413.3,506.7 1408.6,511.0 1404.9,506.7 1408.6,504.2" opacity="0.72"/><polygon points="1414.8,500.3 1412.7,505.4 1408.7,504.2 1407.8,498.0 1413.0,496.3" opacity="0.64"/><polygon points="1411.0,493.8 1416.3,490.2 1419.7,493.8 1416.9,496.7" opacity="0.81"/><polygon points="1424.2,486.0 1420.1,491.0 1417.2,486.1" opacity="0.63"/><polygon points="1425.8,475.7 1430.8,473.4 1433.9,478.6 1430.0,482.2 1425.2,482.1" opacity="0.60"/><polygon points="1428.5,471.5 1434.2,476.9 1428.1,478.3" opacity="0.70"/><polygon points="1437.1,469.3 1432.2,469.5 1437.0,461.3 1442.9,464.1" opacity="0.85"/><polygon points="1440.4,463.1 1434.8,461.8 1438.4,455.0 1443.4,460.5" opacity="0.89"/><polygon points="1423.7,453.9 1428.3,451.9 1434.8,460.6 1429.9,462.7 1421.9,460.7" opacity="0.64"/><polygon points="1422.6,468.8 1410.1,469.7 1414.0,460.6" opacity="0.67"/><polygon points="1421.4,475.5 1418.6,463.4 1430.1,471.1" opacity="0.80"/><path d="M1225.0 150.0L1166.0 178.0" stroke="#e6e6e6" stroke-width="3.5" opacity="0.75"/><path d="M1221.7 151.6L1229.2 156.7M1215.2 154.7L1220.6 158.4M1208.6 157.8L1215.1 162.2M1202.1 160.9L1207.9 164.9M1195.5 164.0L1200.8 167.7M1188.9 167.1L1195.1 171.3M1182.4 170.2L1187.4 173.7M1175.8 173.3L1182.1 177.6M1169.3 176.4L1177.3 182.0" stroke="#e6e6e6" stroke-width="2.5" opacity="0.68" stroke-linecap="round"/><path d="M1205.0 445.0L1322.0 530.0" stroke="#e6e6e6" stroke-width="4.0" opacity="0.75"/><path d="M1208.7 447.7L1210.7 440.7M1216.0 453.0L1219.1 442.1M1223.3 458.3L1225.4 450.8M1230.6 463.6L1233.9 452.0M1237.9 468.9L1240.5 459.9M1245.2 474.2L1247.6 466.1M1252.5 479.5L1255.7 468.6M1259.8 484.8L1262.5 475.7M1267.2 490.2L1269.1 483.5M1274.5 495.5L1277.2 485.8M1281.8 500.8L1284.3 492.0M1289.1 506.1L1292.0 495.9M1296.4 511.4L1299.7 499.9M1303.7 516.7L1305.9 509.1M1311.0 522.0L1312.9 515.4M1318.3 527.3L1320.8 518.6" stroke="#e6e6e6" stroke-width="3.0" opacity="0.68" stroke-linecap="round"/><path d="M1421.0 380.0L1335.0 470.0" stroke="#e6e6e6" stroke-width="4.5" opacity="0.75"/><path d="M1417.4 383.8L1423.3 387.7M1417.4 383.8L1412.2 376.7M1410.2 391.2L1415.0 394.5M1410.2 391.2L1406.3 385.9M1403.1 398.8L1408.2 402.2M1403.1 398.8L1398.2 392.1M1395.9 406.2L1402.7 410.8M1395.9 406.2L1392.1 401.0M1388.8 413.8L1395.9 418.5M1388.8 413.8L1385.9 409.8M1381.6 421.2L1386.5 424.5M1381.6 421.2L1378.7 417.3M1374.4 428.8L1379.3 432.0M1374.4 428.8L1369.4 422.0M1367.2 436.2L1374.6 441.1M1367.2 436.2L1363.0 430.5M1360.1 443.8L1366.0 447.7M1360.1 443.8L1356.2 438.4M1352.9 451.2L1358.2 454.8M1352.9 451.2L1348.8 445.7M1345.8 458.8L1351.8 462.8M1345.8 458.8L1342.5 454.4M1338.6 466.2L1345.5 470.9M1338.6 466.2L1334.2 460.2" stroke="#e6e6e6" stroke-width="3.5" opacity="0.68" stroke-linecap="round"/><path d="M1440.0 460.0L1398.0 520.0" stroke="#e6e6e6" stroke-width="3.5" opacity="0.75"/><path d="M1437.7 463.3L1445.7 465.5M1437.7 463.3L1434.5 458.8M1433.0 470.0L1439.5 471.8M1433.0 470.0L1428.6 463.7M1428.3 476.7L1436.2 478.8M1428.3 476.7L1424.9 471.7M1423.7 483.3L1429.1 484.8M1423.7 483.3L1419.9 477.9M1419.0 490.0L1425.4 491.7M1419.0 490.0L1415.2 484.6M1414.3 496.7L1419.5 498.0M1414.3 496.7L1411.0 491.8M1409.7 503.3L1417.3 505.4M1409.7 503.3L1404.7 496.2M1405.0 510.0L1410.8 511.5M1405.0 510.0L1401.8 505.4M1400.3 516.7L1407.9 518.7M1400.3 516.7L1395.6 509.8" stroke="#e6e6e6" stroke-width="2.5" opacity="0.68" stroke-linecap="round"/><path d="M1190.0 266.0L1200.0 329.0" stroke="#e6e6e6" stroke-width="3.5" opacity="0.75"/><path d="M1190.6 269.5L1194.9 266.6M1190.6 269.5L1184.7 267.8M1191.7 276.5L1198.0 272.2M1191.7 276.5L1184.6 274.5M1192.8 283.5L1197.9 280.0M1192.8 283.5L1186.7 281.7M1193.9 290.5L1199.0 287.1M1193.9 290.5L1188.1 288.8M1195.0 297.5L1199.5 294.4M1195.0 297.5L1187.6 295.4M1196.1 304.5L1201.8 300.7M1196.1 304.5L1190.5 302.9M1197.2 311.5L1201.3 308.7M1197.2 311.5L1192.9 310.3M1198.3 318.5L1202.9 315.4M1198.3 318.5L1192.6 316.9M1199.4 325.5L1205.2 321.6M1199.4 325.5L1192.2 323.4" stroke="#e6e6e6" stroke-width="2.5" opacity="0.68" stroke-linecap="round"/><path d="M1500.0 220.0L1515.0 288.0" stroke="#e6e6e6" stroke-width="3.0" opacity="0.75"/><path d="M1500.8 223.4L1507.2 220.0M1502.2 230.2L1511.1 225.6M1503.8 237.0L1513.6 231.9M1505.2 243.8L1514.4 239.0M1506.8 250.6L1516.1 245.7M1508.2 257.4L1514.8 254.0M1509.8 264.2L1518.1 259.9M1511.2 271.0L1520.3 266.3M1512.8 277.8L1519.1 274.5M1514.2 284.6L1520.6 281.3" stroke="#e6e6e6" stroke-width="2.0" opacity="0.68" stroke-linecap="round"/><path d="M1210.0 372.0L1158.0 422.0" stroke="#e6e6e6" stroke-width="3.5" opacity="0.75"/><path d="M1206.8 375.1L1211.9 377.7M1206.8 375.1L1204.4 369.9M1200.2 381.4L1206.9 384.6M1200.2 381.4L1196.8 373.6M1193.8 387.6L1201.9 391.6M1193.8 387.6L1189.9 378.9M1187.2 393.9L1194.6 397.5M1187.2 393.9L1183.3 385.1M1180.8 400.1L1187.9 403.6M1180.8 400.1L1177.6 392.9M1174.2 406.4L1179.2 408.8M1174.2 406.4L1171.4 400.0M1167.8 412.6L1173.0 415.2M1167.8 412.6L1164.2 404.6M1161.2 418.9L1166.6 421.5M1161.2 418.9L1158.9 413.7" stroke="#e6e6e6" stroke-width="2.5" opacity="0.68" stroke-linecap="round"/><rect x="1238.6" y="102.2" width="12.1" height="5.9" transform="rotate(-12 1244.7 105.1)" opacity="0.71"/><rect x="1244.0" y="110.4" width="9.8" height="5.8" transform="rotate(-14 1249.0 113.3)" opacity="0.78"/><rect x="1254.7" y="108.5" width="10.7" height="3.8" transform="rotate(-4 1260.1 110.4)" opacity="0.74"/><rect x="1284.6" y="117.7" width="11.4" height="3.8" transform="rotate(-8 1290.2 119.6)" opacity="0.83"/><rect x="1243.7" y="116.6" width="10.5" height="5.0" transform="rotate(-20 1248.9 119.1)" opacity="0.83"/><rect x="1227.0" y="124.3" width="15.9" height="5.1" transform="rotate(-16 1235.0 126.8)" opacity="0.57"/><rect x="1238.7" y="121.9" width="17.1" height="4.7" transform="rotate(-17 1247.3 124.2)" opacity="0.86"/><rect x="1224.3" y="120.5" width="15.5" height="3.8" transform="rotate(-11 1232.1 122.4)" opacity="0.64"/><rect x="1245.6" y="119.3" width="9.9" height="5.1" transform="rotate(-15 1250.6 121.9)" opacity="0.90"/><rect x="1255.0" y="100.3" width="16.9" height="5.3" transform="rotate(-16 1263.4 103.0)" opacity="0.59"/><rect x="1237.0" y="126.8" width="11.7" height="6.0" transform="rotate(-7 1242.9 129.8)" opacity="0.56"/><rect x="1238.6" y="127.0" width="14.4" height="4.1" transform="rotate(-11 1245.7 129.0)" opacity="0.66"/><rect x="1235.9" y="133.1" width="9.2" height="4.5" transform="rotate(-5 1240.5 135.3)" opacity="0.71"/><rect x="1300.9" y="119.0" width="15.2" height="5.4" transform="rotate(-7 1308.5 121.7)" opacity="0.55"/><rect x="1386.9" y="112.2" width="15.4" height="6.7" transform="rotate(15 1394.6 115.5)" opacity="0.83"/><rect x="1398.7" y="124.6" width="10.3" height="6.4" transform="rotate(12 1403.8 127.8)" opacity="0.73"/><rect x="1357.0" y="109.3" width="17.4" height="5.8" transform="rotate(8 1365.7 112.2)" opacity="0.81"/><rect x="1352.7" y="117.8" width="15.9" height="6.4" transform="rotate(18 1360.6 120.9)" opacity="0.74"/><rect x="1364.9" y="110.9" width="13.5" height="6.5" transform="rotate(9 1371.7 114.1)" opacity="0.60"/><rect x="1372.0" y="109.4" width="11.9" height="7.2" transform="rotate(18 1377.9 113.0)" opacity="0.63"/><rect x="1395.8" y="146.0" width="13.4" height="7.5" transform="rotate(15 1402.5 149.7)" opacity="0.68"/><rect x="1400.1" y="116.0" width="16.7" height="6.6" transform="rotate(5 1408.5 119.3)" opacity="0.72"/><rect x="1393.3" y="135.9" width="12.5" height="6.8" transform="rotate(9 1399.5 139.3)" opacity="0.56"/><rect x="1351.2" y="138.7" width="10.6" height="6.6" transform="rotate(8 1356.5 142.1)" opacity="0.65"/><rect x="1386.9" y="124.3" width="13.9" height="5.4" transform="rotate(19 1393.8 127.0)" opacity="0.58"/><rect x="1395.5" y="145.8" width="16.7" height="6.0" transform="rotate(9 1403.9 148.8)" opacity="0.82"/><polygon points="1108.4,262.4 1109.2,273.3 1101.0,270.1" opacity="0.90"/><polygon points="1106.3,256.1 1109.3,251.1 1115.5,257.1 1110.1,261.5" opacity="0.93"/><polygon points="1115.8,251.8 1111.6,244.5 1115.9,238.8 1123.9,241.6 1121.7,249.4" opacity="0.80"/><polygon points="1123.9,228.5 1130.3,235.6 1122.1,236.7" opacity="0.61"/><polygon points="1137.9,222.4 1130.4,230.8 1128.4,219.3" opacity="0.86"/><polygon points="1139.4,217.3 1134.4,216.6 1136.4,210.4 1141.5,208.6 1143.3,213.4" opacity="0.63"/><polygon points="1211.0,308.8 1200.9,315.4 1196.5,308.7 1200.3,301.1 1207.2,303.6" opacity="0.86"/><polygon points="1234.5,329.8 1244.4,326.8 1243.0,335.7" opacity="0.95"/><polygon points="1220.7,308.2 1227.8,309.9 1222.9,320.5 1218.0,322.8 1216.3,315.0" opacity="0.73"/><polygon points="1236.8,318.6 1244.3,324.1 1232.3,333.4 1228.3,325.9" opacity="0.72"/></g>
</g>
<ellipse cx="1323" cy="306" rx="103.6" ry="109.6" fill="none" stroke="#e8e870" stroke-width="1.3"/>
<text x="1223.9" y="187" font-size="15.6" fill="#00c800" textLength="134" lengthAdjust="spacingAndGlyphs">Set18-43_body_bulk</text>
<text x="958.2" y="640.3" font-size="15" font-weight="bold" fill="#fff" textLength="22.7" lengthAdjust="spacingAndGlyphs">138</text>
<text x="953.1" y="659.2" font-size="15" font-weight="bold" fill="#fff" textLength="31.1" lengthAdjust="spacingAndGlyphs">Ch 1</text>
<text x="1002.6" y="659.2" font-size="15" font-weight="bold" fill="#fff" textLength="77.0" lengthAdjust="spacingAndGlyphs">MAG: 850x</text>
<text x="1097.0" y="659.2" font-size="15" font-weight="bold" fill="#fff" textLength="67.2" lengthAdjust="spacingAndGlyphs">HV: 15 kV</text>
<text x="1183.0" y="659.2" font-size="15" font-weight="bold" fill="#fff" textLength="91.6" lengthAdjust="spacingAndGlyphs">WD: 13,4 mm</text>
<text x="1292.3" y="659.2" font-size="15" font-weight="bold" fill="#fff" textLength="81.5" lengthAdjust="spacingAndGlyphs">Px: 0,19 µm</text>
<text x="1615.7" y="641.5" font-size="15" font-weight="bold" fill="#fff" textLength="41.3" lengthAdjust="spacingAndGlyphs">30 µm</text>
<path d="M1557 647.6H1717M1557 640.7V657M1717 640.7V657" stroke="#fff" stroke-width="2" fill="none"/>
<rect x="79.5" y="1470.7" width="1618.5" height="30.3" fill="#d9d9d9"/>
<path d="M79.5 1470.7H1698V1532H79.5ZM79.5 1501H1698" stroke="#111" stroke-width="1.1" fill="none"/>
<text x="118.5" y="1494.2" font-size="21" fill="#000" stroke="#000" stroke-width="0.35" textLength="42.3" lengthAdjust="spacingAndGlyphs">MM</text>
<text x="203.4" y="1494.2" font-size="21" fill="#000" stroke="#000" stroke-width="0.35" textLength="156.5" lengthAdjust="spacingAndGlyphs">Spectrum name</text>
<text x="590.3" y="1494.2" font-size="21" fill="#000" stroke="#000" stroke-width="0.35" textLength="69.4" lengthAdjust="spacingAndGlyphs">setting</text>
<text x="664.8" y="1494.2" font-size="21" fill="#000" stroke="#000" stroke-width="0.35" textLength="14.1" lengthAdjust="spacingAndGlyphs">C</text>
<text x="687.9" y="1494.2" font-size="21" fill="#000" stroke="#000" stroke-width="0.35" textLength="16.6" lengthAdjust="spacingAndGlyphs">O</text>
<text x="712.8" y="1494.2" font-size="21" fill="#000" stroke="#000" stroke-width="0.35" textLength="57.2" lengthAdjust="spacingAndGlyphs">Na2O</text>
<text x="782.2" y="1494.2" font-size="21" fill="#000" stroke="#000" stroke-width="0.35" textLength="48.6" lengthAdjust="spacingAndGlyphs">MgO</text>
<text x="840.8" y="1494.2" font-size="21" fill="#000" stroke="#000" stroke-width="0.35" textLength="60.4" lengthAdjust="spacingAndGlyphs">Al2O3</text>
<text x="913.4" y="1494.2" font-size="21" fill="#000" stroke="#000" stroke-width="0.35" textLength="47.0" lengthAdjust="spacingAndGlyphs">SiO2</text>
<text x="975.1" y="1494.2" font-size="21" fill="#000" stroke="#000" stroke-width="0.35" textLength="52.5" lengthAdjust="spacingAndGlyphs">P2O5</text>
<text x="1046.1" y="1494.2" font-size="21" fill="#000" stroke="#000" stroke-width="0.35" textLength="40.6" lengthAdjust="spacingAndGlyphs">SO3</text>
<text x="1100.5" y="1494.2" font-size="21" fill="#000" stroke="#000" stroke-width="0.35" textLength="41.3" lengthAdjust="spacingAndGlyphs">K2O</text>
<text x="1154.5" y="1494.2" font-size="21" fill="#000" stroke="#000" stroke-width="0.35" textLength="41.9" lengthAdjust="spacingAndGlyphs">CaO</text>
<text x="1212.1" y="1494.2" font-size="21" fill="#000" stroke="#000" stroke-width="0.35" textLength="46.2" lengthAdjust="spacingAndGlyphs">TiO2</text>
<text x="1264.2" y="1494.2" font-size="21" fill="#000" stroke="#000" stroke-width="0.35" textLength="62.4" lengthAdjust="spacingAndGlyphs">Cr2O3</text>
<text x="1334.8" y="1494.2" font-size="21" fill="#000" stroke="#000" stroke-width="0.35" textLength="50.4" lengthAdjust="spacingAndGlyphs">MnO</text>
<text x="1405.8" y="1494.2" font-size="21" fill="#000" stroke="#000" stroke-width="0.35" textLength="39.6" lengthAdjust="spacingAndGlyphs">FeO</text>
<text x="1457.2" y="1494.2" font-size="21" fill="#000" stroke="#000" stroke-width="0.35" textLength="27.3" lengthAdjust="spacingAndGlyphs">Co</text>
<text x="1506.1" y="1494.2" font-size="21" fill="#000" stroke="#000" stroke-width="0.35" textLength="23.0" lengthAdjust="spacingAndGlyphs">Ni</text>
<text x="1557.1" y="1494.2" font-size="21" fill="#000" stroke="#000" stroke-width="0.35" textLength="27.3" lengthAdjust="spacingAndGlyphs">Cu</text>
<text x="1600.5" y="1494.2" font-size="21" fill="#000" stroke="#000" stroke-width="0.35" textLength="24.9" lengthAdjust="spacingAndGlyphs">Zn</text>
<text x="1644.1" y="1494.2" font-size="21" fill="#000" stroke="#000" stroke-width="0.35" textLength="44.5" lengthAdjust="spacingAndGlyphs">Sum</text>
<text x="83.0" y="1524.8" font-size="21" fill="#000" stroke="#000" stroke-width="0.35" textLength="105.6" lengthAdjust="spacingAndGlyphs">THMM604</text>
<text x="203.4" y="1524.8" font-size="21" fill="#000" stroke="#000" stroke-width="0.35" textLength="204.3" lengthAdjust="spacingAndGlyphs">Set18-43_body_bulk</text>
<text x="617.5" y="1524.8" font-size="21" fill="#000" stroke="#000" stroke-width="0.35" textLength="13.4" lengthAdjust="spacingAndGlyphs">1</text>
<text x="663.9" y="1524.8" font-size="21" fill="#000" stroke="#000" stroke-width="0.35" textLength="13.4" lengthAdjust="spacingAndGlyphs">0</text>
<text x="689.5" y="1524.8" font-size="21" fill="#000" stroke="#000" stroke-width="0.35" textLength="13.4" lengthAdjust="spacingAndGlyphs">0</text>
<text x="783.8" y="1524.8" font-size="21" fill="#000" stroke="#000" stroke-width="0.35" textLength="43.8" lengthAdjust="spacingAndGlyphs">11,9</text>
<text x="854.2" y="1524.8" font-size="21" fill="#000" stroke="#000" stroke-width="0.35" textLength="32.6" lengthAdjust="spacingAndGlyphs">5,9</text>
<text x="913.4" y="1524.8" font-size="21" fill="#000" stroke="#000" stroke-width="0.35" textLength="44.7" lengthAdjust="spacingAndGlyphs">42,2</text>
<text x="984.7" y="1524.8" font-size="21" fill="#000" stroke="#000" stroke-width="0.35" textLength="31.6" lengthAdjust="spacingAndGlyphs">0,2</text>
<text x="1160.0" y="1524.8" font-size="21" fill="#000" stroke="#000" stroke-width="0.35" textLength="30.5" lengthAdjust="spacingAndGlyphs">3,1</text>
<text x="1279.5" y="1524.8" font-size="21" fill="#000" stroke="#000" stroke-width="0.35" textLength="30.8" lengthAdjust="spacingAndGlyphs">0,3</text>
<text x="1404.1" y="1524.8" font-size="21" fill="#000" stroke="#000" stroke-width="0.35" textLength="43.0" lengthAdjust="spacingAndGlyphs">36,0</text>
<text x="1501.8" y="1524.8" font-size="21" fill="#000" stroke="#000" stroke-width="0.35" textLength="30.5" lengthAdjust="spacingAndGlyphs">0,4</text>
<text x="1639.5" y="1524.8" font-size="21" fill="#000" stroke="#000" stroke-width="0.35" textLength="54.3" lengthAdjust="spacingAndGlyphs">100,0</text>
<text x="83" y="1556" font-size="19.5" fill="#000" stroke="#000" stroke-width="0.3" textLength="1437" lengthAdjust="spacingAndGlyphs">setting 1: preset elements: C(not unfolding),O,Mg,Al,Si,Ca,Cr,Fe,Ni; optional elements: Na,P,S,K,Ti,Mn,Co,Cu,Zn (values normalized to 100%; measurement poorly calibrated)</text>
</svg></body></html>
